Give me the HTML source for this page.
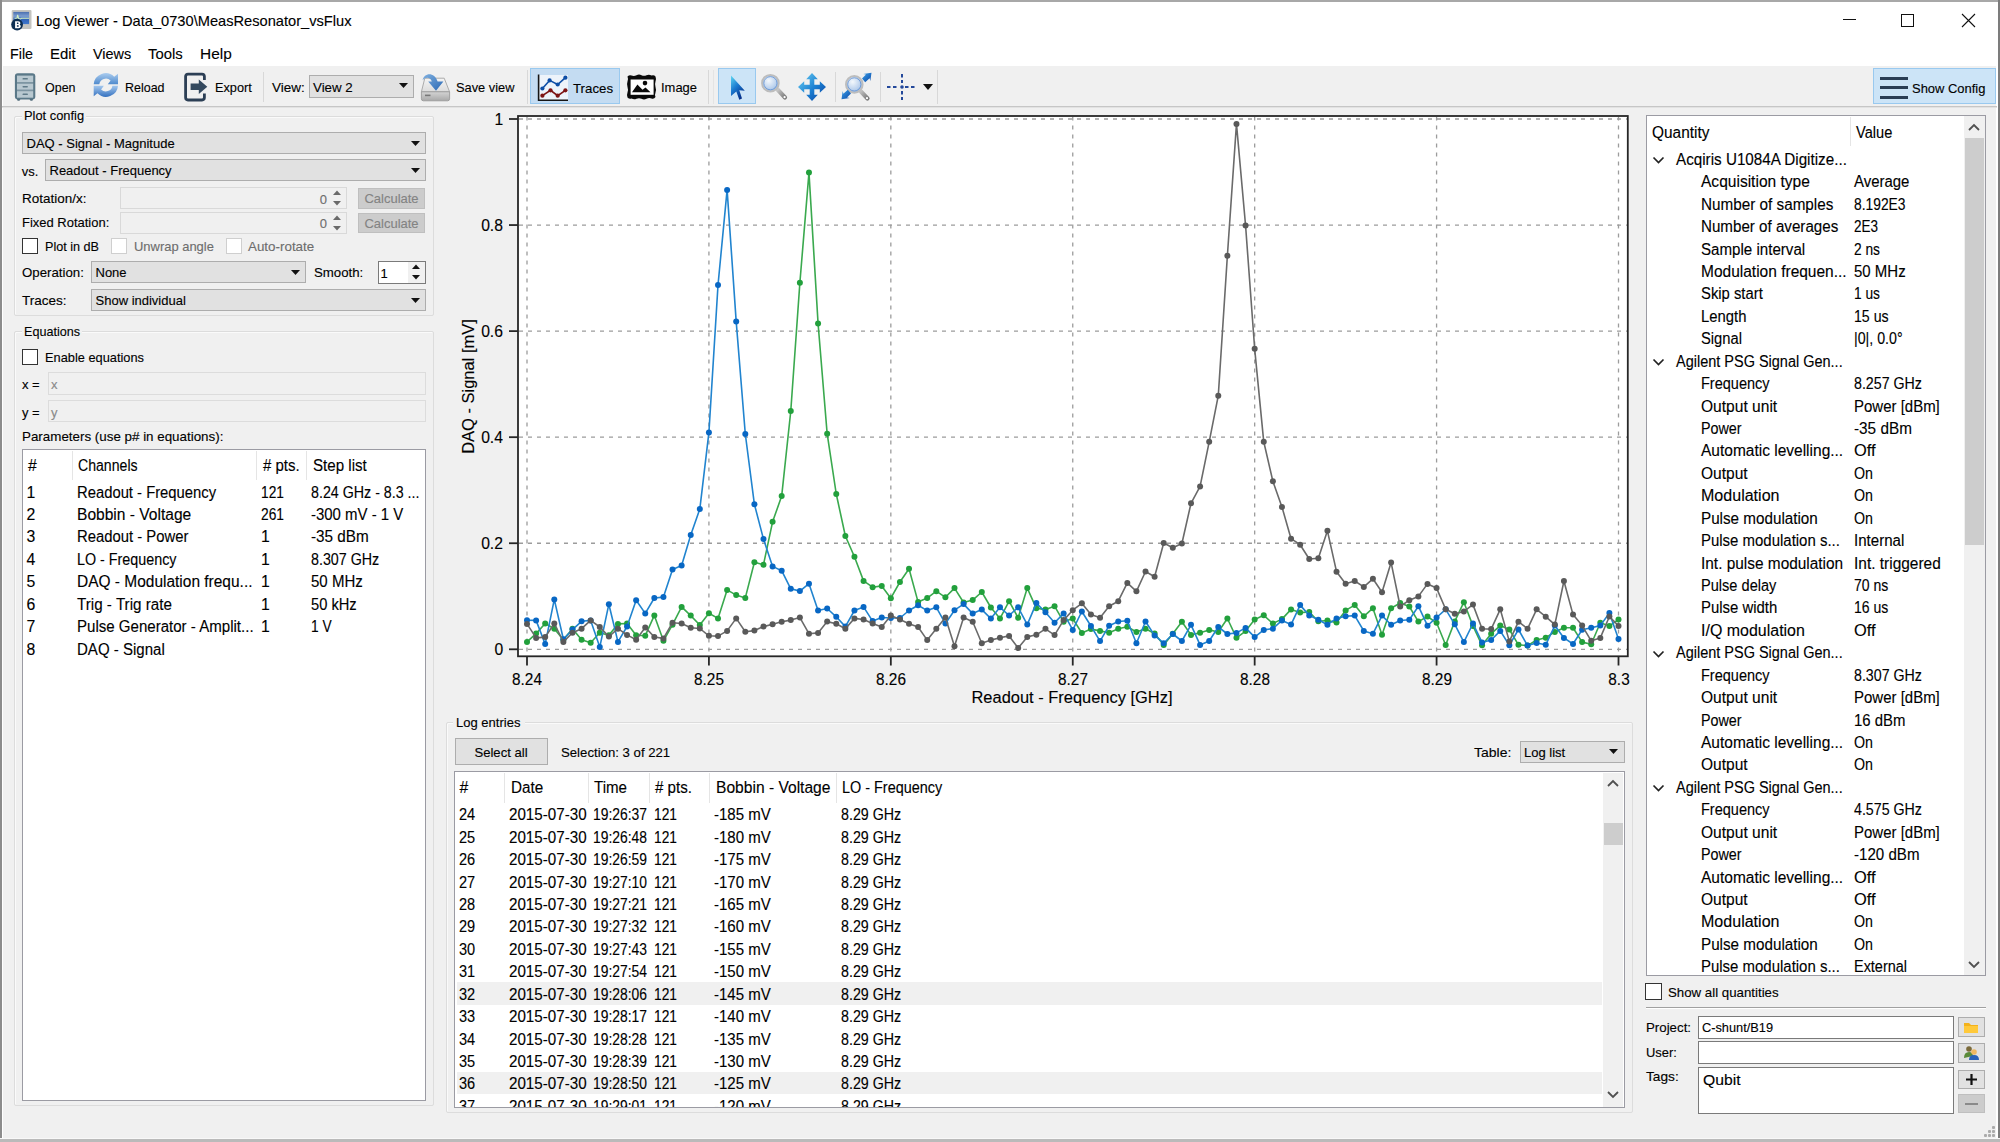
<!DOCTYPE html>
<html><head><meta charset="utf-8"><title>Log Viewer</title>
<style>
html,body{margin:0;padding:0;width:2000px;height:1142px;overflow:hidden;background:#f0f0f0;}
body{position:relative;font-family:"Liberation Sans", sans-serif;color:#000;}
.t{position:absolute;white-space:nowrap;-webkit-text-stroke:0.12px currentColor;}
.r{position:absolute;}
svg.r{overflow:visible;}
</style></head><body>
<div class="r" style="left:0px;top:0px;width:2000px;height:1142px;background:#f0f0f0;"></div>
<div class="r" style="left:0px;top:0px;width:2000px;height:66px;background:#ffffff;"></div>
<div class="r" style="left:0px;top:0px;width:2000px;height:2px;background:#a8a8a8;"></div>
<div class="r" style="left:0px;top:0px;width:2px;height:1142px;background:#8c8c8c;"></div>
<div class="r" style="left:2px;top:66px;width:1px;height:1073px;background:#ffffff;"></div>
<div class="r" style="left:1996px;top:66px;width:2px;height:1073px;background:#ffffff;"></div>
<div class="r" style="left:1998px;top:0px;width:2px;height:1142px;background:#7c7c7c;"></div>
<div class="r" style="left:0px;top:1138px;width:2000px;height:1px;background:#f8f8f8;"></div>
<div class="r" style="left:0px;top:1139px;width:2000px;height:3px;background:#bababa;"></div>
<svg class="r" style="left:10px;top:9px;" width="24" height="24" viewBox="0 0 24 24"><defs><linearGradient id="scr" x1="0" y1="0" x2="0" y2="1"><stop offset="0" stop-color="#4a6fb0"/><stop offset="0.35" stop-color="#7d9ed0"/><stop offset="0.6" stop-color="#2f62b8"/><stop offset="1" stop-color="#3f78cc"/></linearGradient></defs><rect x="1.7" y="0.9" width="19.8" height="19.1" rx="1.2" fill="#c4c4c0"/><rect x="3.3" y="2.9" width="15.8" height="12.2" fill="url(#scr)"/><path d="M4.5 9.3 L7 9.3 L7.6 5.8 L8.6 9.3 L10 10.2 L11.5 9.3 L19 9.3" stroke="#d4f0c0" stroke-width="1.1" fill="none"/><circle cx="7.1" cy="15.6" r="5.9" fill="#0c2e52"/><path d="M5.1 12.2 H8.2 Q10.4 12.2 10.4 14.1 Q10.4 15.2 9.5 15.6 Q10.8 16 10.8 17.4 Q10.8 19.2 8.4 19.2 H5.1 Z M6.9 13.6 V15 H7.9 Q8.6 15 8.6 14.3 Q8.6 13.6 7.9 13.6 Z M6.9 16.3 V17.8 H8.1 Q8.9 17.8 8.9 17 Q8.9 16.3 8.1 16.3 Z" fill="#fff" fill-rule="evenodd"/></svg>
<div class="t" style="left:35.80px;top:13.30px;font-size:15px;line-height:15px;transform:scaleX(0.9761);transform-origin:0 0;">Log Viewer - Data_0730\MeasResonator_vsFlux</div>
<div class="r" style="left:1843px;top:19px;width:13px;height:1px;background:#111;"></div>
<div class="r" style="left:1901px;top:14px;width:13px;height:13px;border:1px solid #111;box-sizing:border-box;"></div>
<svg class="r" style="left:1961px;top:13px;" width="15" height="15" viewBox="0 0 15 15"><path d="M1 1 L14 14 M14 1 L1 14" stroke="#111" stroke-width="1.1"/></svg>
<div class="t" style="left:10.00px;top:46.25px;font-size:15.3px;line-height:15.3px;transform:scaleX(0.9330);transform-origin:0 0;">File</div>
<div class="t" style="left:50.00px;top:46.25px;font-size:15.3px;line-height:15.3px;transform:scaleX(0.9767);transform-origin:0 0;">Edit</div>
<div class="t" style="left:92.50px;top:46.25px;font-size:15.3px;line-height:15.3px;transform:scaleX(0.9436);transform-origin:0 0;">Views</div>
<div class="t" style="left:148.25px;top:46.25px;font-size:15.3px;line-height:15.3px;transform:scaleX(0.9729);transform-origin:0 0;">Tools</div>
<div class="t" style="left:200.00px;top:46.25px;font-size:15.3px;line-height:15.3px;transform:scaleX(1.0090);transform-origin:0 0;">Help</div>
<div class="r" style="left:2px;top:106px;width:1995px;height:1px;background:#c6c6c6;"></div>
<div class="r" style="left:2px;top:107px;width:1995px;height:1px;background:#e2e2e2;"></div>
<svg class="r" style="left:14px;top:73px;" width="22" height="29" viewBox="0 0 22 29"><ellipse cx="4.6" cy="26.6" rx="1.6" ry="1.2" fill="#4a6575"/><ellipse cx="17.4" cy="26.6" rx="1.6" ry="1.2" fill="#4a6575"/><rect x="0.9" y="0.3" width="20.4" height="26.3" rx="3" fill="#5a7888"/><rect x="3" y="2.6" width="16.2" height="6.4" fill="#b8c8d0"/><rect x="3" y="10.4" width="16.2" height="6.4" fill="#b8c8d0"/><rect x="3" y="18.1" width="16.2" height="6.6" fill="#b8c8d0"/><rect x="3" y="9" width="16.2" height="1.4" fill="#7d95a2"/><rect x="3" y="16.8" width="16.2" height="1.3" fill="#7d95a2"/><rect x="8.5" y="5.1" width="5.4" height="1.5" rx="0.7" fill="#5f7a88"/><rect x="8.5" y="12.9" width="5.4" height="1.5" rx="0.7" fill="#5f7a88"/><rect x="8.5" y="20.6" width="5.4" height="1.5" rx="0.7" fill="#5f7a88"/></svg>
<div class="t" style="left:44.50px;top:81.00px;font-size:13px;line-height:13px;transform:scaleX(0.9591);transform-origin:0 0;">Open</div>
<svg class="r" style="left:92px;top:71.5px;" width="28" height="28" viewBox="0 0 28 28"><defs><linearGradient id="rg1" x1="0" y1="0" x2="0" y2="1"><stop offset="0" stop-color="#a9cbee"/><stop offset="1" stop-color="#4f8acd"/></linearGradient><linearGradient id="rg2" x1="0" y1="0" x2="0" y2="1"><stop offset="0" stop-color="#3672c0"/><stop offset="1" stop-color="#a4c8ee"/></linearGradient></defs><path d="M1.7 12.3 A12 12 0 0 1 22.2 4.8 L26 1.7 V12.3 H15.8 L18.6 8.6 A6.6 6.6 0 0 0 7.3 12.3 Z" fill="url(#rg1)"/><path transform="rotate(180 13.85 13)" d="M1.7 12.3 A12 12 0 0 1 22.2 4.8 L26 1.7 V12.3 H15.8 L18.6 8.6 A6.6 6.6 0 0 0 7.3 12.3 Z" fill="url(#rg2)"/></svg>
<div class="t" style="left:125.00px;top:81.00px;font-size:13px;line-height:13px;transform:scaleX(0.9589);transform-origin:0 0;">Reload</div>
<svg class="r" style="left:183px;top:72px;" width="26" height="30" viewBox="0 0 26 30"><path d="M12 2.2 H5 Q2.6 2.2 2.6 4.6 V25.6 Q2.6 28 5 28 H12" stroke="#2c3f55" stroke-width="2.8" fill="none"/><path d="M12 2.2 H19 Q21.4 2.2 21.4 4.6 V8 M21.4 21.6 V25.6 Q21.4 28 19 28 H12" stroke="#2c3f55" stroke-width="2.8" fill="none"/><path d="M7.6 11.6 H15.8 V7.5 L24.3 14.8 L15.8 22 V18 H7.6 Z" fill="#34495e"/></svg>
<div class="t" style="left:214.50px;top:81.00px;font-size:13px;line-height:13px;transform:scaleX(0.9781);transform-origin:0 0;">Export</div>
<div class="r" style="left:263px;top:72px;width:1px;height:30px;background:#d8d8d8;"></div>
<div class="t" style="left:271.75px;top:81.00px;font-size:13px;line-height:13px;transform:scaleX(1.0379);transform-origin:0 0;">View:</div>
<div class="r" style="left:309px;top:75px;width:105px;height:23px;background:#e1e1e1;border:1px solid #adadad;box-sizing:border-box;"></div>
<div class="t" style="left:313.25px;top:81.00px;font-size:13px;line-height:13px;transform:scaleX(1.0249);transform-origin:0 0;">View 2</div>
<svg class="r" style="left:399px;top:83px;" width="10" height="6" viewBox="0 0 10 6"><path d="M0 0 H9 L4.5 5 Z" fill="#111"/></svg>
<svg class="r" style="left:420px;top:72px;" width="32" height="30" viewBox="0 0 32 30"><defs><linearGradient id="sv1" x1="0" y1="0" x2="0" y2="1"><stop offset="0" stop-color="#f4f4f4"/><stop offset="1" stop-color="#dcdcdc"/></linearGradient><linearGradient id="sv2" x1="0" y1="0" x2="0" y2="1"><stop offset="0" stop-color="#d4d4d4"/><stop offset="1" stop-color="#a8a8a8"/></linearGradient><linearGradient id="sv3" x1="0" y1="0" x2="1" y2="1"><stop offset="0" stop-color="#7fb0e0"/><stop offset="1" stop-color="#2a68b4"/></linearGradient></defs><path d="M4.8 6.2 H24.2 L29.6 19.8 H1.4 Z" fill="url(#sv1)" stroke="#a4a4a4" stroke-width="0.9"/><path d="M1.4 19.8 H29.6 V26.8 Q29.6 28.8 27.6 28.8 H3.4 Q1.4 28.8 1.4 26.8 Z" fill="url(#sv2)" stroke="#9a9a9a" stroke-width="0.9"/><rect x="5" y="22.6" width="5.5" height="1.6" fill="#777"/><path d="M2.6 8.2 C4 0.5 14.5 -0.5 17.6 9.6 L23.4 9.6 L16 18.8 L8.2 9.6 L11.8 9.6 C10.2 5.2 6.2 4.6 2.6 8.2 Z" fill="url(#sv3)"/></svg>
<div class="t" style="left:455.50px;top:81.00px;font-size:13px;line-height:13px;transform:scaleX(0.9874);transform-origin:0 0;">Save view</div>
<div class="r" style="left:527px;top:70px;width:1px;height:34px;background:#d8d8d8;"></div>
<div class="r" style="left:530px;top:68px;width:90px;height:36px;background:#c4dcf2;border:1px solid #99c9ef;box-sizing:border-box;"></div>
<svg class="r" style="left:536px;top:72px;" width="34" height="30" viewBox="0 0 34 30"><rect x="3" y="3" width="29" height="25" fill="#edf3fa"/><path d="M2.6 2.6 V28.2 H32" stroke="#151515" stroke-width="1.6" fill="none"/><path d="M6.4 16.5 L13.6 8.4 L21.7 12.5 L29.4 5.7" stroke="#0d4ea6" stroke-width="1.6" fill="none"/><path d="M6.4 23.7 L14.5 18.3 L21.7 23.7 L29.4 18.3" stroke="#7d1414" stroke-width="1.6" fill="none"/><g fill="#0d4ea6"><circle cx="6.4" cy="16.5" r="2.1"/><circle cx="13.6" cy="8.4" r="2.1"/><circle cx="21.7" cy="12.5" r="2.1"/><circle cx="29.4" cy="5.7" r="2.1"/></g><g fill="#7d1414"><circle cx="6.4" cy="23.7" r="2.1"/><circle cx="14.5" cy="18.3" r="2.1"/><circle cx="21.7" cy="23.7" r="2.1"/><circle cx="29.4" cy="18.3" r="2.1"/></g></svg>
<div class="t" style="left:572.50px;top:82.00px;font-size:13px;line-height:13px;transform:scaleX(1.0192);transform-origin:0 0;">Traces</div>
<svg class="r" style="left:625px;top:73px;" width="33" height="28" viewBox="0 0 33 28"><path d="M2.5 3.5 Q4.5 1.5 6.5 2.5 Q9 3.5 11.5 2.2 Q14 1 16.5 2.2 Q19 3.5 21.5 2.2 Q24 1 26.5 2.5 Q29 1.5 30.5 3.5 Q31.5 6 30.5 8.5 Q29.5 11.5 30.5 14 Q31.5 17 30.5 19.5 Q29.5 22 30.5 24 Q29 26.5 26.5 25.5 Q24 24.5 21.5 25.8 Q19 27 16.5 25.8 Q14 24.5 11.5 25.8 Q9 27 6.5 25.5 Q4.5 26.5 2.5 24.5 Q1.5 22 2.5 19.5 Q3.5 17 2.5 14 Q1.5 11.5 2.5 8.5 Q3.5 6 2.5 3.5 Z" fill="#0a0a0a"/><rect x="5.6" y="6.5" width="23" height="15.3" fill="#fff"/><path d="M7 19.2 L12.4 11.5 L17.5 16.8 L20.5 14.5 L25.5 19.2 Z" fill="#0a0a0a"/><circle cx="20" cy="10.1" r="2.3" fill="#0a0a0a"/></svg>
<div class="t" style="left:661.00px;top:81.00px;font-size:13px;line-height:13px;transform:scaleX(0.9964);transform-origin:0 0;">Image</div>
<div class="r" style="left:708px;top:70px;width:1px;height:34px;background:#d8d8d8;"></div>
<div class="r" style="left:713px;top:70px;width:1px;height:34px;background:#e4e4e4;"></div>
<div class="r" style="left:718px;top:68px;width:38px;height:36px;background:#cce4f7;border:1px solid #99c9ef;box-sizing:border-box;"></div>
<svg class="r" style="left:728px;top:74px;" width="18" height="28" viewBox="0 0 18 28"><defs><linearGradient id="pg" x1="0" y1="0" x2="0.6" y2="1"><stop offset="0" stop-color="#5fd8f2"/><stop offset="0.5" stop-color="#1a7ad0"/><stop offset="1" stop-color="#06308a"/></linearGradient></defs><path d="M3 1.5 L16.8 16.8 L11.3 16.2 L14 24.6 L11.3 25.8 L8.3 17.6 L3 22 Z" fill="url(#pg)"/></svg>
<svg class="r" style="left:759px;top:72px;" width="32" height="32" viewBox="0 0 32 32"><defs><radialGradient id="lg" cx="0.4" cy="0.35" r="0.7"><stop offset="0" stop-color="#f4f8fc"/><stop offset="1" stop-color="#9dbde6"/></radialGradient><linearGradient id="hg" x1="0" y1="0" x2="1" y2="1"><stop offset="0" stop-color="#c8c8c8"/><stop offset="1" stop-color="#7a7a7a"/></linearGradient></defs><line x1="18.5" y1="17.5" x2="26" y2="25.5" stroke="url(#hg)" stroke-width="4.2" stroke-linecap="round"/><circle cx="25.6" cy="25.2" r="1.1" fill="#fff"/><circle cx="11.4" cy="11.2" r="8.3" fill="url(#lg)" stroke="#bdbdbd" stroke-width="2"/><circle cx="11.4" cy="11.2" r="6.6" fill="none" stroke="#5f8fd0" stroke-width="0.8"/></svg>
<svg class="r" style="left:797px;top:72px;" width="30" height="30" viewBox="0 0 30 30"><defs><linearGradient id="pn" x1="0" y1="0" x2="1" y2="1"><stop offset="0" stop-color="#6fd3f4"/><stop offset="0.55" stop-color="#1b7fd2"/><stop offset="1" stop-color="#0a3f9e"/></linearGradient></defs><path d="M15 1 L20.8 7.2 H17.3 V12.7 H22.8 V9.2 L29 15 L22.8 20.8 V17.3 H17.3 V22.8 H20.8 L15 29 L9.2 22.8 H12.7 V17.3 H7.2 V20.8 L1 15 L7.2 9.2 V12.7 H12.7 V7.2 H9.2 Z" fill="url(#pn)"/></svg>
<div class="r" style="left:835px;top:72px;width:1px;height:30px;background:#d8d8d8;"></div>
<svg class="r" style="left:840px;top:72px;" width="34" height="32" viewBox="0 0 34 32"><defs><linearGradient id="zf" x1="0" y1="0" x2="1" y2="1"><stop offset="0" stop-color="#3aa0e8"/><stop offset="1" stop-color="#0a48a8"/></linearGradient></defs><line x1="20" y1="18.5" x2="27.5" y2="26.5" stroke="url(#hg)" stroke-width="4.2" stroke-linecap="round"/><circle cx="27" cy="26.2" r="1.1" fill="#fff"/><circle cx="14.3" cy="12.4" r="8.3" fill="url(#lg)" stroke="#bdbdbd" stroke-width="2"/><circle cx="14.3" cy="12.4" r="6.6" fill="none" stroke="#5f8fd0" stroke-width="0.8"/><path d="M22 6.5 L26 2.5 L23.2 2 L31.5 0.8 L30.3 9 L29.6 6.2 L25.2 10.2 Z" fill="url(#zf)"/><path d="M11 21.5 L7 25.5 L9.8 26 L1.5 27.2 L2.7 19 L3.4 21.8 L7.8 17.8 Z" fill="url(#zf)"/></svg>
<div class="r" style="left:880px;top:72px;width:1px;height:30px;background:#d8d8d8;"></div>
<svg class="r" style="left:886px;top:73px;" width="32" height="28" viewBox="0 0 32 28"><path d="M1 14 H12 M19 14 H31" stroke="#23489a" stroke-width="2" stroke-dasharray="3.5 2.5"/><path d="M16 1 V10 M16 18 V27" stroke="#23489a" stroke-width="2" stroke-dasharray="3.5 2.5"/><circle cx="16" cy="14" r="1.8" fill="#23489a"/></svg>
<svg class="r" style="left:923px;top:84px;" width="11" height="7" viewBox="0 0 11 7"><path d="M0 0 H10 L5 6 Z" fill="#111"/></svg>
<div class="r" style="left:937px;top:70px;width:1px;height:34px;background:#d8d8d8;"></div>
<div class="r" style="left:1873px;top:68px;width:123px;height:36px;background:#cce4f7;border:1px solid #99c9ef;box-sizing:border-box;"></div>
<div class="r" style="left:1880px;top:77px;width:28px;height:3px;background:#2a3e55;"></div>
<div class="r" style="left:1880px;top:86px;width:28px;height:3px;background:#2a3e55;"></div>
<div class="r" style="left:1880px;top:96px;width:28px;height:3px;background:#2a3e55;"></div>
<div class="t" style="left:1911.60px;top:82.00px;font-size:13px;line-height:13px;transform:scaleX(0.9958);transform-origin:0 0;">Show Config</div>
<div class="r" style="left:14px;top:116px;width:420px;height:200px;border:1px solid #dcdcdc;box-sizing:border-box;border-radius:2px;box-shadow:inset 1px 1px 0 #fafafa;"></div>
<div class="r" style="left:22px;top:108px;width:64px;height:14px;background:#f0f0f0;"></div>
<div class="t" style="left:24.30px;top:108.80px;font-size:13px;line-height:13px;transform:scaleX(0.9901);transform-origin:0 0;">Plot config</div>
<div class="r" style="left:22px;top:132px;width:404px;height:22px;background:#e1e1e1;border:1px solid #adadad;box-sizing:border-box;"></div>
<div class="t" style="left:26.50px;top:136.60px;font-size:13px;line-height:13px;">DAQ - Signal - Magnitude</div>
<svg class="r" style="left:411px;top:140.5px;" width="10" height="6" viewBox="0 0 10 6"><path d="M0 0 H9 L4.5 5 Z" fill="#111"/></svg>
<div class="t" style="left:21.80px;top:164.60px;font-size:13px;line-height:13px;">vs.</div>
<div class="r" style="left:45px;top:159px;width:381px;height:22px;background:#e1e1e1;border:1px solid #adadad;box-sizing:border-box;"></div>
<div class="t" style="left:49.50px;top:163.60px;font-size:13px;line-height:13px;">Readout - Frequency</div>
<svg class="r" style="left:411px;top:167.5px;" width="10" height="6" viewBox="0 0 10 6"><path d="M0 0 H9 L4.5 5 Z" fill="#111"/></svg>
<div class="t" style="left:22.00px;top:191.80px;font-size:13px;line-height:13px;transform:scaleX(1.0363);transform-origin:0 0;">Rotation/x:</div>
<div class="r" style="left:120px;top:187px;width:227px;height:22px;background:#f0f0f0;border:1px solid #d9d9d9;box-sizing:border-box;"></div>
<div class="t" style="right:1673.00px;top:192.50px;font-size:13px;line-height:13px;text-align:right;color:#6d6d6d;">0</div>
<svg class="r" style="left:332px;top:189px;" width="10" height="18" viewBox="0 0 10 18"><path d="M1 6 L5 1.5 L9 6 Z" fill="#6a6a6a"/><path d="M1 12 L5 16.5 L9 12 Z" fill="#6a6a6a"/></svg>
<div class="r" style="left:358px;top:188px;width:67px;height:21px;background:#cccccc;border:1px solid #bfbfbf;box-sizing:border-box;"></div>
<div class="t" style="left:191.50px;width:400px;text-align:center;top:192.00px;font-size:13px;line-height:13px;color:#838383;">Calculate</div>
<div class="t" style="left:22.00px;top:216.40px;font-size:13px;line-height:13px;transform:scaleX(0.9985);transform-origin:0 0;">Fixed Rotation:</div>
<div class="r" style="left:120px;top:212px;width:227px;height:22px;background:#f0f0f0;border:1px solid #d9d9d9;box-sizing:border-box;"></div>
<div class="t" style="right:1673.00px;top:217.00px;font-size:13px;line-height:13px;text-align:right;color:#6d6d6d;">0</div>
<svg class="r" style="left:332px;top:214px;" width="10" height="18" viewBox="0 0 10 18"><path d="M1 6 L5 1.5 L9 6 Z" fill="#6a6a6a"/><path d="M1 12 L5 16.5 L9 12 Z" fill="#6a6a6a"/></svg>
<div class="r" style="left:358px;top:213px;width:67px;height:20px;background:#cccccc;border:1px solid #bfbfbf;box-sizing:border-box;"></div>
<div class="t" style="left:191.50px;width:400px;text-align:center;top:216.50px;font-size:13px;line-height:13px;color:#838383;">Calculate</div>
<div class="r" style="left:22px;top:238px;width:16px;height:16px;background:#fff;border:1px solid #333;box-sizing:border-box;"></div>
<div class="t" style="left:44.50px;top:240.00px;font-size:13px;line-height:13px;transform:scaleX(0.9705);transform-origin:0 0;">Plot in dB</div>
<div class="r" style="left:111px;top:238px;width:16px;height:16px;background:#fff;border:1px solid #cfcfcf;box-sizing:border-box;"></div>
<div class="t" style="left:133.50px;top:240.00px;font-size:13px;line-height:13px;color:#6d6d6d;transform:scaleX(0.9961);transform-origin:0 0;">Unwrap angle</div>
<div class="r" style="left:226px;top:238px;width:16px;height:16px;background:#fff;border:1px solid #cfcfcf;box-sizing:border-box;"></div>
<div class="t" style="left:248.00px;top:240.00px;font-size:13px;line-height:13px;color:#6d6d6d;transform:scaleX(1.0293);transform-origin:0 0;">Auto-rotate</div>
<div class="t" style="left:22.00px;top:265.80px;font-size:13px;line-height:13px;transform:scaleX(1.0197);transform-origin:0 0;">Operation:</div>
<div class="r" style="left:91px;top:261px;width:215px;height:22px;background:#e1e1e1;border:1px solid #adadad;box-sizing:border-box;"></div>
<div class="t" style="left:95.50px;top:265.60px;font-size:13px;line-height:13px;">None</div>
<svg class="r" style="left:291px;top:269.5px;" width="10" height="6" viewBox="0 0 10 6"><path d="M0 0 H9 L4.5 5 Z" fill="#111"/></svg>
<div class="t" style="left:313.50px;top:265.80px;font-size:13px;line-height:13px;transform:scaleX(1.0183);transform-origin:0 0;">Smooth:</div>
<div class="r" style="left:378px;top:261px;width:48px;height:23px;background:#fff;border:1px solid #7a7a7a;box-sizing:border-box;"></div>
<div class="t" style="left:380.50px;top:266.50px;font-size:13px;line-height:13px;">1</div>
<div class="r" style="left:408px;top:262px;width:17px;height:21px;background:#f0f0f0;"></div>
<svg class="r" style="left:411px;top:263px;" width="10" height="18" viewBox="0 0 10 18"><path d="M1 6 L5 1.5 L9 6 Z" fill="#111"/><path d="M1 12 L5 16.5 L9 12 Z" fill="#111"/></svg>
<div class="t" style="left:22.00px;top:294.00px;font-size:13px;line-height:13px;transform:scaleX(1.0406);transform-origin:0 0;">Traces:</div>
<div class="r" style="left:91px;top:289px;width:335px;height:22px;background:#e1e1e1;border:1px solid #adadad;box-sizing:border-box;"></div>
<div class="t" style="left:95.50px;top:293.60px;font-size:13px;line-height:13px;">Show individual</div>
<svg class="r" style="left:411px;top:297.5px;" width="10" height="6" viewBox="0 0 10 6"><path d="M0 0 H9 L4.5 5 Z" fill="#111"/></svg>
<div class="r" style="left:14px;top:331px;width:420px;height:775px;border:1px solid #dcdcdc;box-sizing:border-box;border-radius:2px;box-shadow:inset 1px 1px 0 #fafafa;"></div>
<div class="r" style="left:22px;top:325px;width:60px;height:14px;background:#f0f0f0;"></div>
<div class="t" style="left:24.30px;top:324.80px;font-size:13px;line-height:13px;transform:scaleX(0.9685);transform-origin:0 0;">Equations</div>
<div class="r" style="left:22px;top:349px;width:16px;height:16px;background:#fff;border:1px solid #333;box-sizing:border-box;"></div>
<div class="t" style="left:44.50px;top:351.00px;font-size:13px;line-height:13px;transform:scaleX(0.9854);transform-origin:0 0;">Enable equations</div>
<div class="t" style="left:22.00px;top:378.00px;font-size:13px;line-height:13px;">x =</div>
<div class="r" style="left:48px;top:372px;width:378px;height:23px;background:#f0f0f0;border:1px solid #dcdcdc;box-sizing:border-box;"></div>
<div class="t" style="left:51.00px;top:378.00px;font-size:13px;line-height:13px;color:#8a8a8a;">x</div>
<div class="t" style="left:22.00px;top:405.50px;font-size:13px;line-height:13px;">y =</div>
<div class="r" style="left:48px;top:400px;width:378px;height:22px;background:#f0f0f0;border:1px solid #dcdcdc;box-sizing:border-box;"></div>
<div class="t" style="left:51.00px;top:405.50px;font-size:13px;line-height:13px;color:#8a8a8a;">y</div>
<div class="t" style="left:22.00px;top:429.50px;font-size:13px;line-height:13px;transform:scaleX(1.0285);transform-origin:0 0;">Parameters (use p# in equations):</div>
<div class="r" style="left:22px;top:449px;width:404px;height:652px;background:#fff;border:1px solid #9b9ba3;box-sizing:border-box;"></div>
<div class="r" style="left:72px;top:451px;width:1px;height:29px;background:#e5e5e5;"></div>
<div class="r" style="left:256px;top:451px;width:1px;height:29px;background:#e5e5e5;"></div>
<div class="r" style="left:306px;top:451px;width:1px;height:29px;background:#e5e5e5;"></div>
<div class="t" style="left:28.00px;top:458.13px;font-size:15.8px;line-height:15.8px;">#</div>
<div class="t" style="left:78.00px;top:458.13px;font-size:15.8px;line-height:15.8px;transform:scaleX(0.8928);transform-origin:0 0;">Channels</div>
<div class="t" style="left:262.50px;top:458.13px;font-size:15.8px;line-height:15.8px;transform:scaleX(0.9497);transform-origin:0 0;"># pts.</div>
<div class="t" style="left:312.50px;top:458.13px;font-size:15.8px;line-height:15.8px;transform:scaleX(0.9572);transform-origin:0 0;">Step list</div>
<div class="t" style="left:26.50px;top:484.63px;font-size:15.8px;line-height:15.8px;">1</div>
<div class="t" style="left:76.50px;top:484.63px;font-size:15.8px;line-height:15.8px;transform:scaleX(0.9372);transform-origin:0 0;">Readout - Frequency</div>
<div class="t" style="left:261.00px;top:484.63px;font-size:15.8px;line-height:15.8px;transform:scaleX(0.8725);transform-origin:0 0;">121</div>
<div class="t" style="left:310.50px;top:484.63px;font-size:15.8px;line-height:15.8px;transform:scaleX(0.9019);transform-origin:0 0;">8.24 GHz - 8.3 ...</div>
<div class="t" style="left:26.50px;top:507.06px;font-size:15.8px;line-height:15.8px;">2</div>
<div class="t" style="left:76.50px;top:507.06px;font-size:15.8px;line-height:15.8px;transform:scaleX(0.9857);transform-origin:0 0;">Bobbin - Voltage</div>
<div class="t" style="left:261.00px;top:507.06px;font-size:15.8px;line-height:15.8px;transform:scaleX(0.8725);transform-origin:0 0;">261</div>
<div class="t" style="left:310.50px;top:507.06px;font-size:15.8px;line-height:15.8px;transform:scaleX(0.9470);transform-origin:0 0;">-300 mV - 1 V</div>
<div class="t" style="left:26.50px;top:529.49px;font-size:15.8px;line-height:15.8px;">3</div>
<div class="t" style="left:76.50px;top:529.49px;font-size:15.8px;line-height:15.8px;transform:scaleX(0.9396);transform-origin:0 0;">Readout - Power</div>
<div class="t" style="left:261.00px;top:529.49px;font-size:15.8px;line-height:15.8px;">1</div>
<div class="t" style="left:310.50px;top:529.49px;font-size:15.8px;line-height:15.8px;transform:scaleX(0.9680);transform-origin:0 0;">-35 dBm</div>
<div class="t" style="left:26.50px;top:551.92px;font-size:15.8px;line-height:15.8px;">4</div>
<div class="t" style="left:76.50px;top:551.92px;font-size:15.8px;line-height:15.8px;transform:scaleX(0.9065);transform-origin:0 0;">LO - Frequency</div>
<div class="t" style="left:261.00px;top:551.92px;font-size:15.8px;line-height:15.8px;">1</div>
<div class="t" style="left:310.50px;top:551.92px;font-size:15.8px;line-height:15.8px;transform:scaleX(0.9030);transform-origin:0 0;">8.307 GHz</div>
<div class="t" style="left:26.50px;top:574.35px;font-size:15.8px;line-height:15.8px;">5</div>
<div class="t" style="left:76.50px;top:574.35px;font-size:15.8px;line-height:15.8px;transform:scaleX(0.9797);transform-origin:0 0;">DAQ - Modulation frequ...</div>
<div class="t" style="left:261.00px;top:574.35px;font-size:15.8px;line-height:15.8px;">1</div>
<div class="t" style="left:310.50px;top:574.35px;font-size:15.8px;line-height:15.8px;transform:scaleX(0.9516);transform-origin:0 0;">50 MHz</div>
<div class="t" style="left:26.50px;top:596.78px;font-size:15.8px;line-height:15.8px;">6</div>
<div class="t" style="left:76.50px;top:596.78px;font-size:15.8px;line-height:15.8px;transform:scaleX(0.9633);transform-origin:0 0;">Trig - Trig rate</div>
<div class="t" style="left:261.00px;top:596.78px;font-size:15.8px;line-height:15.8px;">1</div>
<div class="t" style="left:310.50px;top:596.78px;font-size:15.8px;line-height:15.8px;transform:scaleX(0.9293);transform-origin:0 0;">50 kHz</div>
<div class="t" style="left:26.50px;top:619.21px;font-size:15.8px;line-height:15.8px;">7</div>
<div class="t" style="left:76.50px;top:619.21px;font-size:15.8px;line-height:15.8px;transform:scaleX(0.9531);transform-origin:0 0;">Pulse Generator - Amplit...</div>
<div class="t" style="left:261.00px;top:619.21px;font-size:15.8px;line-height:15.8px;">1</div>
<div class="t" style="left:310.50px;top:619.21px;font-size:15.8px;line-height:15.8px;transform:scaleX(0.8728);transform-origin:0 0;">1 V</div>
<div class="t" style="left:26.50px;top:641.64px;font-size:15.8px;line-height:15.8px;">8</div>
<div class="t" style="left:76.50px;top:641.64px;font-size:15.8px;line-height:15.8px;transform:scaleX(0.9523);transform-origin:0 0;">DAQ - Signal</div>
<div class="t" style="left:261.00px;top:641.64px;font-size:15.8px;line-height:15.8px;"></div>
<div class="t" style="left:310.50px;top:641.64px;font-size:15.8px;line-height:15.8px;"></div>
<svg class="r" style="left:440px;top:106px;" width="1200" height="606" viewBox="0 0 1200 606"><rect x="78" y="10" width="1110" height="540" fill="#fff"/><line x1="79" y1="543.30" x2="1187" y2="543.30" stroke="#9c9c9c" stroke-width="1.3" stroke-dasharray="4 5" stroke-dashoffset="0"/><line x1="79" y1="437.24" x2="1187" y2="437.24" stroke="#9c9c9c" stroke-width="1.3" stroke-dasharray="4 5" stroke-dashoffset="0"/><line x1="79" y1="331.18" x2="1187" y2="331.18" stroke="#9c9c9c" stroke-width="1.3" stroke-dasharray="4 5" stroke-dashoffset="0"/><line x1="79" y1="225.12" x2="1187" y2="225.12" stroke="#9c9c9c" stroke-width="1.3" stroke-dasharray="4 5" stroke-dashoffset="0"/><line x1="79" y1="119.06" x2="1187" y2="119.06" stroke="#9c9c9c" stroke-width="1.3" stroke-dasharray="4 5" stroke-dashoffset="0"/><line x1="79" y1="13.00" x2="1187" y2="13.00" stroke="#9c9c9c" stroke-width="1.3" stroke-dasharray="4 5" stroke-dashoffset="0"/><line x1="87.00" y1="11" x2="87.00" y2="549" stroke="#9c9c9c" stroke-width="1.3" stroke-dasharray="4 5" stroke-dashoffset="0.6"/><line x1="268.92" y1="11" x2="268.92" y2="549" stroke="#9c9c9c" stroke-width="1.3" stroke-dasharray="4 5" stroke-dashoffset="0.6"/><line x1="450.83" y1="11" x2="450.83" y2="549" stroke="#9c9c9c" stroke-width="1.3" stroke-dasharray="4 5" stroke-dashoffset="0.6"/><line x1="632.75" y1="11" x2="632.75" y2="549" stroke="#9c9c9c" stroke-width="1.3" stroke-dasharray="4 5" stroke-dashoffset="0.6"/><line x1="814.67" y1="11" x2="814.67" y2="549" stroke="#9c9c9c" stroke-width="1.3" stroke-dasharray="4 5" stroke-dashoffset="0.6"/><line x1="996.58" y1="11" x2="996.58" y2="549" stroke="#9c9c9c" stroke-width="1.3" stroke-dasharray="4 5" stroke-dashoffset="0.6"/><line x1="1178.50" y1="11" x2="1178.50" y2="549" stroke="#9c9c9c" stroke-width="1.3" stroke-dasharray="4 5" stroke-dashoffset="0.6"/><polyline points="87.00,535.90 96.10,527.60 105.19,517.50 114.29,522.70 123.38,533.70 132.48,522.70 141.58,533.70 150.67,536.70 159.77,526.70 168.86,529.30 177.96,517.90 187.05,517.50 196.15,529.30 205.25,529.70 214.34,509.40 223.44,534.80 232.53,518.70 241.63,500.90 250.73,509.60 259.82,519.00 268.92,507.20 278.01,512.40 287.11,483.90 296.20,489.10 305.30,491.90 314.40,456.30 323.49,458.70 332.59,415.80 341.68,390.10 350.78,305.00 359.88,176.80 368.97,66.60 378.07,217.50 387.16,327.70 396.26,388.00 405.35,430.00 414.45,450.80 423.55,474.90 432.64,481.20 441.74,479.90 450.83,492.20 459.93,476.00 469.02,462.70 478.12,496.10 487.22,492.10 496.31,485.20 505.41,491.30 514.50,482.10 523.60,496.50 532.70,494.10 541.79,486.00 550.89,501.50 559.98,512.60 569.08,495.20 578.17,511.80 587.27,482.10 596.37,502.30 605.46,503.60 614.56,500.20 623.65,515.80 632.75,512.60 641.85,527.00 650.94,523.10 660.04,524.90 669.13,526.70 678.23,522.80 687.33,520.70 696.42,526.00 705.52,522.80 714.61,527.50 723.71,539.10 732.80,527.80 741.90,515.70 751.00,528.90 760.09,526.70 769.19,523.90 778.28,526.00 787.38,512.50 796.47,531.80 805.57,525.10 814.67,513.50 823.76,509.30 832.86,517.50 841.95,513.10 851.05,503.40 860.15,506.60 869.24,506.00 878.34,515.20 887.43,514.50 896.53,516.60 905.62,504.40 914.72,499.10 923.82,510.30 932.91,502.20 942.01,528.80 951.10,502.20 960.20,497.00 969.30,500.50 978.39,515.60 987.49,510.50 996.58,516.80 1005.68,539.00 1014.78,515.40 1023.87,496.20 1032.97,519.90 1042.06,539.30 1051.16,527.70 1060.25,519.60 1069.35,523.50 1078.45,538.80 1087.54,539.60 1096.64,534.00 1105.73,531.70 1114.83,525.90 1123.92,521.70 1133.02,521.70 1142.12,536.10 1151.21,538.20 1160.31,516.80 1169.40,519.90 1178.50,513.60" fill="none" stroke="#3aa94e" stroke-width="1.6" stroke-linejoin="round"/><g fill="#22a03c"><circle cx="87.00" cy="535.90" r="3"/><circle cx="96.10" cy="527.60" r="3"/><circle cx="105.19" cy="517.50" r="3"/><circle cx="114.29" cy="522.70" r="3"/><circle cx="123.38" cy="533.70" r="3"/><circle cx="132.48" cy="522.70" r="3"/><circle cx="141.58" cy="533.70" r="3"/><circle cx="150.67" cy="536.70" r="3"/><circle cx="159.77" cy="526.70" r="3"/><circle cx="168.86" cy="529.30" r="3"/><circle cx="177.96" cy="517.90" r="3"/><circle cx="187.05" cy="517.50" r="3"/><circle cx="196.15" cy="529.30" r="3"/><circle cx="205.25" cy="529.70" r="3"/><circle cx="214.34" cy="509.40" r="3"/><circle cx="223.44" cy="534.80" r="3"/><circle cx="232.53" cy="518.70" r="3"/><circle cx="241.63" cy="500.90" r="3"/><circle cx="250.73" cy="509.60" r="3"/><circle cx="259.82" cy="519.00" r="3"/><circle cx="268.92" cy="507.20" r="3"/><circle cx="278.01" cy="512.40" r="3"/><circle cx="287.11" cy="483.90" r="3"/><circle cx="296.20" cy="489.10" r="3"/><circle cx="305.30" cy="491.90" r="3"/><circle cx="314.40" cy="456.30" r="3"/><circle cx="323.49" cy="458.70" r="3"/><circle cx="332.59" cy="415.80" r="3"/><circle cx="341.68" cy="390.10" r="3"/><circle cx="350.78" cy="305.00" r="3"/><circle cx="359.88" cy="176.80" r="3"/><circle cx="368.97" cy="66.60" r="3"/><circle cx="378.07" cy="217.50" r="3"/><circle cx="387.16" cy="327.70" r="3"/><circle cx="396.26" cy="388.00" r="3"/><circle cx="405.35" cy="430.00" r="3"/><circle cx="414.45" cy="450.80" r="3"/><circle cx="423.55" cy="474.90" r="3"/><circle cx="432.64" cy="481.20" r="3"/><circle cx="441.74" cy="479.90" r="3"/><circle cx="450.83" cy="492.20" r="3"/><circle cx="459.93" cy="476.00" r="3"/><circle cx="469.02" cy="462.70" r="3"/><circle cx="478.12" cy="496.10" r="3"/><circle cx="487.22" cy="492.10" r="3"/><circle cx="496.31" cy="485.20" r="3"/><circle cx="505.41" cy="491.30" r="3"/><circle cx="514.50" cy="482.10" r="3"/><circle cx="523.60" cy="496.50" r="3"/><circle cx="532.70" cy="494.10" r="3"/><circle cx="541.79" cy="486.00" r="3"/><circle cx="550.89" cy="501.50" r="3"/><circle cx="559.98" cy="512.60" r="3"/><circle cx="569.08" cy="495.20" r="3"/><circle cx="578.17" cy="511.80" r="3"/><circle cx="587.27" cy="482.10" r="3"/><circle cx="596.37" cy="502.30" r="3"/><circle cx="605.46" cy="503.60" r="3"/><circle cx="614.56" cy="500.20" r="3"/><circle cx="623.65" cy="515.80" r="3"/><circle cx="632.75" cy="512.60" r="3"/><circle cx="641.85" cy="527.00" r="3"/><circle cx="650.94" cy="523.10" r="3"/><circle cx="660.04" cy="524.90" r="3"/><circle cx="669.13" cy="526.70" r="3"/><circle cx="678.23" cy="522.80" r="3"/><circle cx="687.33" cy="520.70" r="3"/><circle cx="696.42" cy="526.00" r="3"/><circle cx="705.52" cy="522.80" r="3"/><circle cx="714.61" cy="527.50" r="3"/><circle cx="723.71" cy="539.10" r="3"/><circle cx="732.80" cy="527.80" r="3"/><circle cx="741.90" cy="515.70" r="3"/><circle cx="751.00" cy="528.90" r="3"/><circle cx="760.09" cy="526.70" r="3"/><circle cx="769.19" cy="523.90" r="3"/><circle cx="778.28" cy="526.00" r="3"/><circle cx="787.38" cy="512.50" r="3"/><circle cx="796.47" cy="531.80" r="3"/><circle cx="805.57" cy="525.10" r="3"/><circle cx="814.67" cy="513.50" r="3"/><circle cx="823.76" cy="509.30" r="3"/><circle cx="832.86" cy="517.50" r="3"/><circle cx="841.95" cy="513.10" r="3"/><circle cx="851.05" cy="503.40" r="3"/><circle cx="860.15" cy="506.60" r="3"/><circle cx="869.24" cy="506.00" r="3"/><circle cx="878.34" cy="515.20" r="3"/><circle cx="887.43" cy="514.50" r="3"/><circle cx="896.53" cy="516.60" r="3"/><circle cx="905.62" cy="504.40" r="3"/><circle cx="914.72" cy="499.10" r="3"/><circle cx="923.82" cy="510.30" r="3"/><circle cx="932.91" cy="502.20" r="3"/><circle cx="942.01" cy="528.80" r="3"/><circle cx="951.10" cy="502.20" r="3"/><circle cx="960.20" cy="497.00" r="3"/><circle cx="969.30" cy="500.50" r="3"/><circle cx="978.39" cy="515.60" r="3"/><circle cx="987.49" cy="510.50" r="3"/><circle cx="996.58" cy="516.80" r="3"/><circle cx="1005.68" cy="539.00" r="3"/><circle cx="1014.78" cy="515.40" r="3"/><circle cx="1023.87" cy="496.20" r="3"/><circle cx="1032.97" cy="519.90" r="3"/><circle cx="1042.06" cy="539.30" r="3"/><circle cx="1051.16" cy="527.70" r="3"/><circle cx="1060.25" cy="519.60" r="3"/><circle cx="1069.35" cy="523.50" r="3"/><circle cx="1078.45" cy="538.80" r="3"/><circle cx="1087.54" cy="539.60" r="3"/><circle cx="1096.64" cy="534.00" r="3"/><circle cx="1105.73" cy="531.70" r="3"/><circle cx="1114.83" cy="525.90" r="3"/><circle cx="1123.92" cy="521.70" r="3"/><circle cx="1133.02" cy="521.70" r="3"/><circle cx="1142.12" cy="536.10" r="3"/><circle cx="1151.21" cy="538.20" r="3"/><circle cx="1160.31" cy="516.80" r="3"/><circle cx="1169.40" cy="519.90" r="3"/><circle cx="1178.50" cy="513.60" r="3"/></g><polyline points="87.00,514.20 96.10,514.40 105.19,538.10 114.29,493.40 123.38,533.20 132.48,523.60 141.58,515.30 150.67,514.40 159.77,541.10 168.86,498.20 177.96,535.90 187.05,520.50 196.15,494.30 205.25,507.40 214.34,492.00 223.44,491.10 232.53,463.50 241.63,459.60 250.73,428.90 259.82,403.10 268.92,326.40 278.01,179.00 287.11,83.90 296.20,215.60 305.30,328.00 314.40,398.30 323.49,433.10 332.59,460.40 341.68,464.70 350.78,482.80 359.88,485.10 368.97,477.70 378.07,504.50 387.16,502.50 396.26,510.80 405.35,520.60 414.45,504.50 423.55,500.90 432.64,515.10 441.74,511.50 450.83,512.00 459.93,512.00 469.02,504.50 478.12,499.20 487.22,504.60 496.31,501.30 505.41,517.60 514.50,504.20 523.60,498.10 532.70,507.60 541.79,503.60 550.89,512.60 559.98,501.30 569.08,509.50 578.17,501.30 587.27,518.60 596.37,497.10 605.46,506.30 614.56,516.80 623.65,507.40 632.75,523.90 641.85,505.50 650.94,520.00 660.04,535.10 669.13,519.70 678.23,515.50 687.33,514.70 696.42,537.20 705.52,515.50 714.61,529.40 723.71,537.20 732.80,528.00 741.90,535.00 751.00,518.80 760.09,538.90 769.19,535.00 778.28,521.00 787.38,528.00 796.47,526.90 805.57,521.90 814.67,531.10 823.76,523.90 832.86,522.70 841.95,514.40 851.05,518.60 860.15,499.10 869.24,509.40 878.34,513.80 887.43,518.70 896.53,512.40 905.62,510.30 914.72,509.60 923.82,525.00 932.91,527.80 942.01,509.60 951.10,518.70 960.20,514.50 969.30,513.80 978.39,500.20 987.49,519.70 996.58,511.50 1005.68,503.30 1014.78,518.30 1023.87,536.10 1032.97,517.50 1042.06,536.40 1051.16,534.00 1060.25,524.90 1069.35,539.30 1078.45,523.50 1087.54,539.60 1096.64,537.00 1105.73,538.80 1114.83,519.60 1123.92,531.90 1133.02,538.00 1142.12,523.80 1151.21,521.70 1160.31,519.60 1169.40,507.00 1178.50,533.00" fill="none" stroke="#2184cf" stroke-width="1.6" stroke-linejoin="round"/><g fill="#0867c4"><circle cx="87.00" cy="514.20" r="3"/><circle cx="96.10" cy="514.40" r="3"/><circle cx="105.19" cy="538.10" r="3"/><circle cx="114.29" cy="493.40" r="3"/><circle cx="123.38" cy="533.20" r="3"/><circle cx="132.48" cy="523.60" r="3"/><circle cx="141.58" cy="515.30" r="3"/><circle cx="150.67" cy="514.40" r="3"/><circle cx="159.77" cy="541.10" r="3"/><circle cx="168.86" cy="498.20" r="3"/><circle cx="177.96" cy="535.90" r="3"/><circle cx="187.05" cy="520.50" r="3"/><circle cx="196.15" cy="494.30" r="3"/><circle cx="205.25" cy="507.40" r="3"/><circle cx="214.34" cy="492.00" r="3"/><circle cx="223.44" cy="491.10" r="3"/><circle cx="232.53" cy="463.50" r="3"/><circle cx="241.63" cy="459.60" r="3"/><circle cx="250.73" cy="428.90" r="3"/><circle cx="259.82" cy="403.10" r="3"/><circle cx="268.92" cy="326.40" r="3"/><circle cx="278.01" cy="179.00" r="3"/><circle cx="287.11" cy="83.90" r="3"/><circle cx="296.20" cy="215.60" r="3"/><circle cx="305.30" cy="328.00" r="3"/><circle cx="314.40" cy="398.30" r="3"/><circle cx="323.49" cy="433.10" r="3"/><circle cx="332.59" cy="460.40" r="3"/><circle cx="341.68" cy="464.70" r="3"/><circle cx="350.78" cy="482.80" r="3"/><circle cx="359.88" cy="485.10" r="3"/><circle cx="368.97" cy="477.70" r="3"/><circle cx="378.07" cy="504.50" r="3"/><circle cx="387.16" cy="502.50" r="3"/><circle cx="396.26" cy="510.80" r="3"/><circle cx="405.35" cy="520.60" r="3"/><circle cx="414.45" cy="504.50" r="3"/><circle cx="423.55" cy="500.90" r="3"/><circle cx="432.64" cy="515.10" r="3"/><circle cx="441.74" cy="511.50" r="3"/><circle cx="450.83" cy="512.00" r="3"/><circle cx="459.93" cy="512.00" r="3"/><circle cx="469.02" cy="504.50" r="3"/><circle cx="478.12" cy="499.20" r="3"/><circle cx="487.22" cy="504.60" r="3"/><circle cx="496.31" cy="501.30" r="3"/><circle cx="505.41" cy="517.60" r="3"/><circle cx="514.50" cy="504.20" r="3"/><circle cx="523.60" cy="498.10" r="3"/><circle cx="532.70" cy="507.60" r="3"/><circle cx="541.79" cy="503.60" r="3"/><circle cx="550.89" cy="512.60" r="3"/><circle cx="559.98" cy="501.30" r="3"/><circle cx="569.08" cy="509.50" r="3"/><circle cx="578.17" cy="501.30" r="3"/><circle cx="587.27" cy="518.60" r="3"/><circle cx="596.37" cy="497.10" r="3"/><circle cx="605.46" cy="506.30" r="3"/><circle cx="614.56" cy="516.80" r="3"/><circle cx="623.65" cy="507.40" r="3"/><circle cx="632.75" cy="523.90" r="3"/><circle cx="641.85" cy="505.50" r="3"/><circle cx="650.94" cy="520.00" r="3"/><circle cx="660.04" cy="535.10" r="3"/><circle cx="669.13" cy="519.70" r="3"/><circle cx="678.23" cy="515.50" r="3"/><circle cx="687.33" cy="514.70" r="3"/><circle cx="696.42" cy="537.20" r="3"/><circle cx="705.52" cy="515.50" r="3"/><circle cx="714.61" cy="529.40" r="3"/><circle cx="723.71" cy="537.20" r="3"/><circle cx="732.80" cy="528.00" r="3"/><circle cx="741.90" cy="535.00" r="3"/><circle cx="751.00" cy="518.80" r="3"/><circle cx="760.09" cy="538.90" r="3"/><circle cx="769.19" cy="535.00" r="3"/><circle cx="778.28" cy="521.00" r="3"/><circle cx="787.38" cy="528.00" r="3"/><circle cx="796.47" cy="526.90" r="3"/><circle cx="805.57" cy="521.90" r="3"/><circle cx="814.67" cy="531.10" r="3"/><circle cx="823.76" cy="523.90" r="3"/><circle cx="832.86" cy="522.70" r="3"/><circle cx="841.95" cy="514.40" r="3"/><circle cx="851.05" cy="518.60" r="3"/><circle cx="860.15" cy="499.10" r="3"/><circle cx="869.24" cy="509.40" r="3"/><circle cx="878.34" cy="513.80" r="3"/><circle cx="887.43" cy="518.70" r="3"/><circle cx="896.53" cy="512.40" r="3"/><circle cx="905.62" cy="510.30" r="3"/><circle cx="914.72" cy="509.60" r="3"/><circle cx="923.82" cy="525.00" r="3"/><circle cx="932.91" cy="527.80" r="3"/><circle cx="942.01" cy="509.60" r="3"/><circle cx="951.10" cy="518.70" r="3"/><circle cx="960.20" cy="514.50" r="3"/><circle cx="969.30" cy="513.80" r="3"/><circle cx="978.39" cy="500.20" r="3"/><circle cx="987.49" cy="519.70" r="3"/><circle cx="996.58" cy="511.50" r="3"/><circle cx="1005.68" cy="503.30" r="3"/><circle cx="1014.78" cy="518.30" r="3"/><circle cx="1023.87" cy="536.10" r="3"/><circle cx="1032.97" cy="517.50" r="3"/><circle cx="1042.06" cy="536.40" r="3"/><circle cx="1051.16" cy="534.00" r="3"/><circle cx="1060.25" cy="524.90" r="3"/><circle cx="1069.35" cy="539.30" r="3"/><circle cx="1078.45" cy="523.50" r="3"/><circle cx="1087.54" cy="539.60" r="3"/><circle cx="1096.64" cy="537.00" r="3"/><circle cx="1105.73" cy="538.80" r="3"/><circle cx="1114.83" cy="519.60" r="3"/><circle cx="1123.92" cy="531.90" r="3"/><circle cx="1133.02" cy="538.00" r="3"/><circle cx="1142.12" cy="523.80" r="3"/><circle cx="1151.21" cy="521.70" r="3"/><circle cx="1160.31" cy="519.60" r="3"/><circle cx="1169.40" cy="507.00" r="3"/><circle cx="1178.50" cy="533.00" r="3"/></g><polyline points="87.00,517.90 96.10,531.90 105.19,531.10 114.29,517.50 123.38,535.90 132.48,526.70 141.58,522.70 150.67,514.40 159.77,521.00 168.86,530.60 177.96,522.70 187.05,528.90 196.15,533.70 205.25,521.40 214.34,531.00 223.44,532.40 232.53,516.70 241.63,517.50 250.73,521.70 259.82,522.50 268.92,529.80 278.01,530.10 287.11,524.90 296.20,512.40 305.30,525.70 314.40,524.60 323.49,520.60 332.59,518.30 341.68,515.70 350.78,514.10 359.88,511.60 368.97,527.70 378.07,526.90 387.16,515.60 396.26,517.80 405.35,522.70 414.45,512.40 423.55,513.50 432.64,517.50 441.74,520.90 450.83,509.60 459.93,513.50 469.02,517.70 478.12,521.00 487.22,534.10 496.31,522.80 505.41,511.60 514.50,540.20 523.60,511.60 532.70,515.80 541.79,537.20 550.89,534.10 559.98,531.80 569.08,529.90 578.17,542.10 587.27,530.90 596.37,528.80 605.46,522.80 614.56,529.10 623.65,514.10 632.75,504.20 641.85,497.30 650.94,508.60 660.04,511.80 669.13,500.20 678.23,495.20 687.33,476.90 696.42,485.30 705.52,465.50 714.61,470.80 723.71,437.00 732.80,441.80 741.90,437.50 751.00,397.30 760.09,380.40 769.19,335.80 778.28,289.70 787.38,149.80 796.47,17.90 805.57,119.50 814.67,242.80 823.76,335.80 832.86,375.20 841.95,400.90 851.05,432.70 860.15,438.70 869.24,453.00 878.34,452.20 887.43,424.80 896.53,465.70 905.62,477.80 914.72,475.00 923.82,480.90 932.91,472.80 942.01,486.20 951.10,456.60 960.20,500.50 969.30,494.20 978.39,490.40 987.49,477.90 996.58,482.10 1005.68,503.30 1014.78,507.80 1023.87,505.40 1032.97,498.60 1042.06,522.80 1051.16,523.10 1060.25,503.30 1069.35,535.40 1078.45,515.70 1087.54,522.80 1096.64,503.30 1105.73,510.70 1114.83,518.60 1123.92,475.00 1133.02,508.60 1142.12,519.60 1151.21,534.80 1160.31,531.90 1169.40,510.50 1178.50,519.90" fill="none" stroke="#6a6a6a" stroke-width="1.6" stroke-linejoin="round"/><g fill="#595959"><circle cx="87.00" cy="517.90" r="3"/><circle cx="96.10" cy="531.90" r="3"/><circle cx="105.19" cy="531.10" r="3"/><circle cx="114.29" cy="517.50" r="3"/><circle cx="123.38" cy="535.90" r="3"/><circle cx="132.48" cy="526.70" r="3"/><circle cx="141.58" cy="522.70" r="3"/><circle cx="150.67" cy="514.40" r="3"/><circle cx="159.77" cy="521.00" r="3"/><circle cx="168.86" cy="530.60" r="3"/><circle cx="177.96" cy="522.70" r="3"/><circle cx="187.05" cy="528.90" r="3"/><circle cx="196.15" cy="533.70" r="3"/><circle cx="205.25" cy="521.40" r="3"/><circle cx="214.34" cy="531.00" r="3"/><circle cx="223.44" cy="532.40" r="3"/><circle cx="232.53" cy="516.70" r="3"/><circle cx="241.63" cy="517.50" r="3"/><circle cx="250.73" cy="521.70" r="3"/><circle cx="259.82" cy="522.50" r="3"/><circle cx="268.92" cy="529.80" r="3"/><circle cx="278.01" cy="530.10" r="3"/><circle cx="287.11" cy="524.90" r="3"/><circle cx="296.20" cy="512.40" r="3"/><circle cx="305.30" cy="525.70" r="3"/><circle cx="314.40" cy="524.60" r="3"/><circle cx="323.49" cy="520.60" r="3"/><circle cx="332.59" cy="518.30" r="3"/><circle cx="341.68" cy="515.70" r="3"/><circle cx="350.78" cy="514.10" r="3"/><circle cx="359.88" cy="511.60" r="3"/><circle cx="368.97" cy="527.70" r="3"/><circle cx="378.07" cy="526.90" r="3"/><circle cx="387.16" cy="515.60" r="3"/><circle cx="396.26" cy="517.80" r="3"/><circle cx="405.35" cy="522.70" r="3"/><circle cx="414.45" cy="512.40" r="3"/><circle cx="423.55" cy="513.50" r="3"/><circle cx="432.64" cy="517.50" r="3"/><circle cx="441.74" cy="520.90" r="3"/><circle cx="450.83" cy="509.60" r="3"/><circle cx="459.93" cy="513.50" r="3"/><circle cx="469.02" cy="517.70" r="3"/><circle cx="478.12" cy="521.00" r="3"/><circle cx="487.22" cy="534.10" r="3"/><circle cx="496.31" cy="522.80" r="3"/><circle cx="505.41" cy="511.60" r="3"/><circle cx="514.50" cy="540.20" r="3"/><circle cx="523.60" cy="511.60" r="3"/><circle cx="532.70" cy="515.80" r="3"/><circle cx="541.79" cy="537.20" r="3"/><circle cx="550.89" cy="534.10" r="3"/><circle cx="559.98" cy="531.80" r="3"/><circle cx="569.08" cy="529.90" r="3"/><circle cx="578.17" cy="542.10" r="3"/><circle cx="587.27" cy="530.90" r="3"/><circle cx="596.37" cy="528.80" r="3"/><circle cx="605.46" cy="522.80" r="3"/><circle cx="614.56" cy="529.10" r="3"/><circle cx="623.65" cy="514.10" r="3"/><circle cx="632.75" cy="504.20" r="3"/><circle cx="641.85" cy="497.30" r="3"/><circle cx="650.94" cy="508.60" r="3"/><circle cx="660.04" cy="511.80" r="3"/><circle cx="669.13" cy="500.20" r="3"/><circle cx="678.23" cy="495.20" r="3"/><circle cx="687.33" cy="476.90" r="3"/><circle cx="696.42" cy="485.30" r="3"/><circle cx="705.52" cy="465.50" r="3"/><circle cx="714.61" cy="470.80" r="3"/><circle cx="723.71" cy="437.00" r="3"/><circle cx="732.80" cy="441.80" r="3"/><circle cx="741.90" cy="437.50" r="3"/><circle cx="751.00" cy="397.30" r="3"/><circle cx="760.09" cy="380.40" r="3"/><circle cx="769.19" cy="335.80" r="3"/><circle cx="778.28" cy="289.70" r="3"/><circle cx="787.38" cy="149.80" r="3"/><circle cx="796.47" cy="17.90" r="3"/><circle cx="805.57" cy="119.50" r="3"/><circle cx="814.67" cy="242.80" r="3"/><circle cx="823.76" cy="335.80" r="3"/><circle cx="832.86" cy="375.20" r="3"/><circle cx="841.95" cy="400.90" r="3"/><circle cx="851.05" cy="432.70" r="3"/><circle cx="860.15" cy="438.70" r="3"/><circle cx="869.24" cy="453.00" r="3"/><circle cx="878.34" cy="452.20" r="3"/><circle cx="887.43" cy="424.80" r="3"/><circle cx="896.53" cy="465.70" r="3"/><circle cx="905.62" cy="477.80" r="3"/><circle cx="914.72" cy="475.00" r="3"/><circle cx="923.82" cy="480.90" r="3"/><circle cx="932.91" cy="472.80" r="3"/><circle cx="942.01" cy="486.20" r="3"/><circle cx="951.10" cy="456.60" r="3"/><circle cx="960.20" cy="500.50" r="3"/><circle cx="969.30" cy="494.20" r="3"/><circle cx="978.39" cy="490.40" r="3"/><circle cx="987.49" cy="477.90" r="3"/><circle cx="996.58" cy="482.10" r="3"/><circle cx="1005.68" cy="503.30" r="3"/><circle cx="1014.78" cy="507.80" r="3"/><circle cx="1023.87" cy="505.40" r="3"/><circle cx="1032.97" cy="498.60" r="3"/><circle cx="1042.06" cy="522.80" r="3"/><circle cx="1051.16" cy="523.10" r="3"/><circle cx="1060.25" cy="503.30" r="3"/><circle cx="1069.35" cy="535.40" r="3"/><circle cx="1078.45" cy="515.70" r="3"/><circle cx="1087.54" cy="522.80" r="3"/><circle cx="1096.64" cy="503.30" r="3"/><circle cx="1105.73" cy="510.70" r="3"/><circle cx="1114.83" cy="518.60" r="3"/><circle cx="1123.92" cy="475.00" r="3"/><circle cx="1133.02" cy="508.60" r="3"/><circle cx="1142.12" cy="519.60" r="3"/><circle cx="1151.21" cy="534.80" r="3"/><circle cx="1160.31" cy="531.90" r="3"/><circle cx="1169.40" cy="510.50" r="3"/><circle cx="1178.50" cy="519.90" r="3"/></g><rect x="78" y="10" width="1109.8" height="540.3" fill="none" stroke="#262626" stroke-width="1.8"/><line x1="69" y1="543.30" x2="78" y2="543.30" stroke="#262626" stroke-width="1.8"/><line x1="69" y1="437.24" x2="78" y2="437.24" stroke="#262626" stroke-width="1.8"/><line x1="69" y1="331.18" x2="78" y2="331.18" stroke="#262626" stroke-width="1.8"/><line x1="69" y1="225.12" x2="78" y2="225.12" stroke="#262626" stroke-width="1.8"/><line x1="69" y1="119.06" x2="78" y2="119.06" stroke="#262626" stroke-width="1.8"/><line x1="69" y1="13.00" x2="78" y2="13.00" stroke="#262626" stroke-width="1.8"/><line x1="87.00" y1="550" x2="87.00" y2="559.5" stroke="#262626" stroke-width="1.8"/><line x1="268.92" y1="550" x2="268.92" y2="559.5" stroke="#262626" stroke-width="1.8"/><line x1="450.83" y1="550" x2="450.83" y2="559.5" stroke="#262626" stroke-width="1.8"/><line x1="632.75" y1="550" x2="632.75" y2="559.5" stroke="#262626" stroke-width="1.8"/><line x1="814.67" y1="550" x2="814.67" y2="559.5" stroke="#262626" stroke-width="1.8"/><line x1="996.58" y1="550" x2="996.58" y2="559.5" stroke="#262626" stroke-width="1.8"/><line x1="1178.50" y1="550" x2="1178.50" y2="559.5" stroke="#262626" stroke-width="1.8"/></svg>
<div class="t" style="right:1497.00px;top:641.23px;font-size:16.5px;line-height:16.5px;text-align:right;transform:scaleX(0.9500);transform-origin:100% 0;">0</div>
<div class="t" style="right:1497.00px;top:535.17px;font-size:16.5px;line-height:16.5px;text-align:right;transform:scaleX(0.9500);transform-origin:100% 0;">0.2</div>
<div class="t" style="right:1497.00px;top:429.11px;font-size:16.5px;line-height:16.5px;text-align:right;transform:scaleX(0.9500);transform-origin:100% 0;">0.4</div>
<div class="t" style="right:1497.00px;top:323.05px;font-size:16.5px;line-height:16.5px;text-align:right;transform:scaleX(0.9500);transform-origin:100% 0;">0.6</div>
<div class="t" style="right:1497.00px;top:216.99px;font-size:16.5px;line-height:16.5px;text-align:right;transform:scaleX(0.9500);transform-origin:100% 0;">0.8</div>
<div class="t" style="right:1497.00px;top:110.93px;font-size:16.5px;line-height:16.5px;text-align:right;transform:scaleX(0.9500);transform-origin:100% 0;">1</div>
<div class="t" style="left:327.00px;width:400px;text-align:center;top:670.53px;font-size:16.5px;line-height:16.5px;transform:scaleX(0.9300);transform-origin:50% 0;">8.24</div>
<div class="t" style="left:508.92px;width:400px;text-align:center;top:670.53px;font-size:16.5px;line-height:16.5px;transform:scaleX(0.9300);transform-origin:50% 0;">8.25</div>
<div class="t" style="left:690.83px;width:400px;text-align:center;top:670.53px;font-size:16.5px;line-height:16.5px;transform:scaleX(0.9300);transform-origin:50% 0;">8.26</div>
<div class="t" style="left:872.75px;width:400px;text-align:center;top:670.53px;font-size:16.5px;line-height:16.5px;transform:scaleX(0.9300);transform-origin:50% 0;">8.27</div>
<div class="t" style="left:1054.67px;width:400px;text-align:center;top:670.53px;font-size:16.5px;line-height:16.5px;transform:scaleX(0.9300);transform-origin:50% 0;">8.28</div>
<div class="t" style="left:1236.58px;width:400px;text-align:center;top:670.53px;font-size:16.5px;line-height:16.5px;transform:scaleX(0.9300);transform-origin:50% 0;">8.29</div>
<div class="t" style="left:1418.50px;width:400px;text-align:center;top:670.53px;font-size:16.5px;line-height:16.5px;transform:scaleX(0.9300);transform-origin:50% 0;">8.3</div>
<div class="t" style="left:872.10px;width:400px;text-align:center;top:688.69px;font-size:16.2px;line-height:16.2px;transform:scaleX(1.0157);transform-origin:50% 0;">Readout - Frequency [GHz]</div>
<div class="t" style="left:317.91px;top:378.15px;width:300px;height:17px;line-height:17px;font-size:17px;text-align:center;transform:rotate(-90deg) scaleX(0.9699);">DAQ - Signal [mV]</div>
<div class="r" style="left:446px;top:722px;width:1187px;height:391px;border:1px solid #dcdcdc;box-sizing:border-box;border-radius:2px;box-shadow:inset 1px 1px 0 #fafafa;"></div>
<div class="r" style="left:453px;top:714px;width:72px;height:14px;background:#f0f0f0;"></div>
<div class="t" style="left:456.20px;top:715.50px;font-size:13px;line-height:13px;transform:scaleX(1.0012);transform-origin:0 0;">Log entries</div>
<div class="r" style="left:455px;top:738px;width:93px;height:27px;background:#e1e1e1;border:1px solid #adadad;box-sizing:border-box;"></div>
<div class="t" style="left:301.00px;width:400px;text-align:center;top:745.50px;font-size:13px;line-height:13px;transform:scaleX(1.0086);transform-origin:50% 0;">Select all</div>
<div class="t" style="left:561.20px;top:745.50px;font-size:13px;line-height:13px;transform:scaleX(1.0140);transform-origin:0 0;">Selection: 3 of 221</div>
<div class="t" style="left:1474.20px;top:745.50px;font-size:13px;line-height:13px;transform:scaleX(1.0753);transform-origin:0 0;">Table:</div>
<div class="r" style="left:1520px;top:741px;width:105px;height:22px;background:#e1e1e1;border:1px solid #adadad;box-sizing:border-box;"></div>
<div class="t" style="left:1524.00px;top:745.50px;font-size:13px;line-height:13px;transform:scaleX(1.0003);transform-origin:0 0;">Log list</div>
<svg class="r" style="left:1609px;top:749px;" width="10" height="6" viewBox="0 0 10 6"><path d="M0 0 H9 L4.5 5 Z" fill="#111"/></svg>
<div class="r" style="left:454px;top:771px;width:1171px;height:337px;background:#fff;border:1px solid #9b9ba3;box-sizing:border-box;overflow:hidden;">
<div class="r" style="left:49px;top:1px;width:1px;height:30px;background:#e5e5e5;"></div>
<div class="r" style="left:133px;top:1px;width:1px;height:30px;background:#e5e5e5;"></div>
<div class="r" style="left:194px;top:1px;width:1px;height:30px;background:#e5e5e5;"></div>
<div class="r" style="left:254px;top:1px;width:1px;height:30px;background:#e5e5e5;"></div>
<div class="r" style="left:381px;top:1px;width:1px;height:30px;background:#e5e5e5;"></div>
<div class="t" style="left:4.50px;top:7.63px;font-size:15.8px;line-height:15.8px;">#</div>
<div class="t" style="left:55.50px;top:7.63px;font-size:15.8px;line-height:15.8px;transform:scaleX(0.9648);transform-origin:0 0;">Date</div>
<div class="t" style="left:139.00px;top:7.63px;font-size:15.8px;line-height:15.8px;transform:scaleX(0.9558);transform-origin:0 0;">Time</div>
<div class="t" style="left:200.00px;top:7.63px;font-size:15.8px;line-height:15.8px;transform:scaleX(0.9575);transform-origin:0 0;"># pts.</div>
<div class="t" style="left:260.50px;top:7.63px;font-size:15.8px;line-height:15.8px;transform:scaleX(0.9874);transform-origin:0 0;">Bobbin - Voltage</div>
<div class="t" style="left:387.00px;top:7.63px;font-size:15.8px;line-height:15.8px;transform:scaleX(0.9129);transform-origin:0 0;">LO - Frequency</div>
<div class="t" style="left:3.50px;top:35.33px;font-size:15.8px;line-height:15.8px;transform:scaleX(0.9218);transform-origin:0 0;">24</div>
<div class="t" style="left:53.50px;top:35.33px;font-size:15.8px;line-height:15.8px;transform:scaleX(0.9601);transform-origin:0 0;">2015-07-30</div>
<div class="t" style="left:137.50px;top:35.33px;font-size:15.8px;line-height:15.8px;transform:scaleX(0.8780);transform-origin:0 0;">19:26:37</div>
<div class="t" style="left:198.50px;top:35.33px;font-size:15.8px;line-height:15.8px;transform:scaleX(0.8725);transform-origin:0 0;">121</div>
<div class="t" style="left:258.50px;top:35.33px;font-size:15.8px;line-height:15.8px;transform:scaleX(0.9512);transform-origin:0 0;">-185 mV</div>
<div class="t" style="left:385.50px;top:35.33px;font-size:15.8px;line-height:15.8px;transform:scaleX(0.9020);transform-origin:0 0;">8.29 GHz</div>
<div class="t" style="left:3.50px;top:57.76px;font-size:15.8px;line-height:15.8px;transform:scaleX(0.9218);transform-origin:0 0;">25</div>
<div class="t" style="left:53.50px;top:57.76px;font-size:15.8px;line-height:15.8px;transform:scaleX(0.9601);transform-origin:0 0;">2015-07-30</div>
<div class="t" style="left:137.50px;top:57.76px;font-size:15.8px;line-height:15.8px;transform:scaleX(0.8780);transform-origin:0 0;">19:26:48</div>
<div class="t" style="left:198.50px;top:57.76px;font-size:15.8px;line-height:15.8px;transform:scaleX(0.8725);transform-origin:0 0;">121</div>
<div class="t" style="left:258.50px;top:57.76px;font-size:15.8px;line-height:15.8px;transform:scaleX(0.9512);transform-origin:0 0;">-180 mV</div>
<div class="t" style="left:385.50px;top:57.76px;font-size:15.8px;line-height:15.8px;transform:scaleX(0.9020);transform-origin:0 0;">8.29 GHz</div>
<div class="t" style="left:3.50px;top:80.19px;font-size:15.8px;line-height:15.8px;transform:scaleX(0.9218);transform-origin:0 0;">26</div>
<div class="t" style="left:53.50px;top:80.19px;font-size:15.8px;line-height:15.8px;transform:scaleX(0.9601);transform-origin:0 0;">2015-07-30</div>
<div class="t" style="left:137.50px;top:80.19px;font-size:15.8px;line-height:15.8px;transform:scaleX(0.8780);transform-origin:0 0;">19:26:59</div>
<div class="t" style="left:198.50px;top:80.19px;font-size:15.8px;line-height:15.8px;transform:scaleX(0.8725);transform-origin:0 0;">121</div>
<div class="t" style="left:258.50px;top:80.19px;font-size:15.8px;line-height:15.8px;transform:scaleX(0.9512);transform-origin:0 0;">-175 mV</div>
<div class="t" style="left:385.50px;top:80.19px;font-size:15.8px;line-height:15.8px;transform:scaleX(0.9020);transform-origin:0 0;">8.29 GHz</div>
<div class="t" style="left:3.50px;top:102.62px;font-size:15.8px;line-height:15.8px;transform:scaleX(0.9218);transform-origin:0 0;">27</div>
<div class="t" style="left:53.50px;top:102.62px;font-size:15.8px;line-height:15.8px;transform:scaleX(0.9601);transform-origin:0 0;">2015-07-30</div>
<div class="t" style="left:137.50px;top:102.62px;font-size:15.8px;line-height:15.8px;transform:scaleX(0.8780);transform-origin:0 0;">19:27:10</div>
<div class="t" style="left:198.50px;top:102.62px;font-size:15.8px;line-height:15.8px;transform:scaleX(0.8725);transform-origin:0 0;">121</div>
<div class="t" style="left:258.50px;top:102.62px;font-size:15.8px;line-height:15.8px;transform:scaleX(0.9512);transform-origin:0 0;">-170 mV</div>
<div class="t" style="left:385.50px;top:102.62px;font-size:15.8px;line-height:15.8px;transform:scaleX(0.9020);transform-origin:0 0;">8.29 GHz</div>
<div class="t" style="left:3.50px;top:125.05px;font-size:15.8px;line-height:15.8px;transform:scaleX(0.9218);transform-origin:0 0;">28</div>
<div class="t" style="left:53.50px;top:125.05px;font-size:15.8px;line-height:15.8px;transform:scaleX(0.9601);transform-origin:0 0;">2015-07-30</div>
<div class="t" style="left:137.50px;top:125.05px;font-size:15.8px;line-height:15.8px;transform:scaleX(0.8780);transform-origin:0 0;">19:27:21</div>
<div class="t" style="left:198.50px;top:125.05px;font-size:15.8px;line-height:15.8px;transform:scaleX(0.8725);transform-origin:0 0;">121</div>
<div class="t" style="left:258.50px;top:125.05px;font-size:15.8px;line-height:15.8px;transform:scaleX(0.9512);transform-origin:0 0;">-165 mV</div>
<div class="t" style="left:385.50px;top:125.05px;font-size:15.8px;line-height:15.8px;transform:scaleX(0.9020);transform-origin:0 0;">8.29 GHz</div>
<div class="t" style="left:3.50px;top:147.48px;font-size:15.8px;line-height:15.8px;transform:scaleX(0.9218);transform-origin:0 0;">29</div>
<div class="t" style="left:53.50px;top:147.48px;font-size:15.8px;line-height:15.8px;transform:scaleX(0.9601);transform-origin:0 0;">2015-07-30</div>
<div class="t" style="left:137.50px;top:147.48px;font-size:15.8px;line-height:15.8px;transform:scaleX(0.8780);transform-origin:0 0;">19:27:32</div>
<div class="t" style="left:198.50px;top:147.48px;font-size:15.8px;line-height:15.8px;transform:scaleX(0.8725);transform-origin:0 0;">121</div>
<div class="t" style="left:258.50px;top:147.48px;font-size:15.8px;line-height:15.8px;transform:scaleX(0.9512);transform-origin:0 0;">-160 mV</div>
<div class="t" style="left:385.50px;top:147.48px;font-size:15.8px;line-height:15.8px;transform:scaleX(0.9020);transform-origin:0 0;">8.29 GHz</div>
<div class="t" style="left:3.50px;top:169.91px;font-size:15.8px;line-height:15.8px;transform:scaleX(0.9218);transform-origin:0 0;">30</div>
<div class="t" style="left:53.50px;top:169.91px;font-size:15.8px;line-height:15.8px;transform:scaleX(0.9601);transform-origin:0 0;">2015-07-30</div>
<div class="t" style="left:137.50px;top:169.91px;font-size:15.8px;line-height:15.8px;transform:scaleX(0.8780);transform-origin:0 0;">19:27:43</div>
<div class="t" style="left:198.50px;top:169.91px;font-size:15.8px;line-height:15.8px;transform:scaleX(0.8725);transform-origin:0 0;">121</div>
<div class="t" style="left:258.50px;top:169.91px;font-size:15.8px;line-height:15.8px;transform:scaleX(0.9512);transform-origin:0 0;">-155 mV</div>
<div class="t" style="left:385.50px;top:169.91px;font-size:15.8px;line-height:15.8px;transform:scaleX(0.9020);transform-origin:0 0;">8.29 GHz</div>
<div class="t" style="left:3.50px;top:192.34px;font-size:15.8px;line-height:15.8px;transform:scaleX(0.9218);transform-origin:0 0;">31</div>
<div class="t" style="left:53.50px;top:192.34px;font-size:15.8px;line-height:15.8px;transform:scaleX(0.9601);transform-origin:0 0;">2015-07-30</div>
<div class="t" style="left:137.50px;top:192.34px;font-size:15.8px;line-height:15.8px;transform:scaleX(0.8780);transform-origin:0 0;">19:27:54</div>
<div class="t" style="left:198.50px;top:192.34px;font-size:15.8px;line-height:15.8px;transform:scaleX(0.8725);transform-origin:0 0;">121</div>
<div class="t" style="left:258.50px;top:192.34px;font-size:15.8px;line-height:15.8px;transform:scaleX(0.9512);transform-origin:0 0;">-150 mV</div>
<div class="t" style="left:385.50px;top:192.34px;font-size:15.8px;line-height:15.8px;transform:scaleX(0.9020);transform-origin:0 0;">8.29 GHz</div>
<div class="r" style="left:2px;top:210.24px;width:1145px;height:22.4px;background:#f0f0f0;"></div>
<div class="t" style="left:3.50px;top:214.77px;font-size:15.8px;line-height:15.8px;transform:scaleX(0.9218);transform-origin:0 0;">32</div>
<div class="t" style="left:53.50px;top:214.77px;font-size:15.8px;line-height:15.8px;transform:scaleX(0.9601);transform-origin:0 0;">2015-07-30</div>
<div class="t" style="left:137.50px;top:214.77px;font-size:15.8px;line-height:15.8px;transform:scaleX(0.8780);transform-origin:0 0;">19:28:06</div>
<div class="t" style="left:198.50px;top:214.77px;font-size:15.8px;line-height:15.8px;transform:scaleX(0.8725);transform-origin:0 0;">121</div>
<div class="t" style="left:258.50px;top:214.77px;font-size:15.8px;line-height:15.8px;transform:scaleX(0.9512);transform-origin:0 0;">-145 mV</div>
<div class="t" style="left:385.50px;top:214.77px;font-size:15.8px;line-height:15.8px;transform:scaleX(0.9020);transform-origin:0 0;">8.29 GHz</div>
<div class="t" style="left:3.50px;top:237.20px;font-size:15.8px;line-height:15.8px;transform:scaleX(0.9218);transform-origin:0 0;">33</div>
<div class="t" style="left:53.50px;top:237.20px;font-size:15.8px;line-height:15.8px;transform:scaleX(0.9601);transform-origin:0 0;">2015-07-30</div>
<div class="t" style="left:137.50px;top:237.20px;font-size:15.8px;line-height:15.8px;transform:scaleX(0.8780);transform-origin:0 0;">19:28:17</div>
<div class="t" style="left:198.50px;top:237.20px;font-size:15.8px;line-height:15.8px;transform:scaleX(0.8725);transform-origin:0 0;">121</div>
<div class="t" style="left:258.50px;top:237.20px;font-size:15.8px;line-height:15.8px;transform:scaleX(0.9512);transform-origin:0 0;">-140 mV</div>
<div class="t" style="left:385.50px;top:237.20px;font-size:15.8px;line-height:15.8px;transform:scaleX(0.9020);transform-origin:0 0;">8.29 GHz</div>
<div class="t" style="left:3.50px;top:259.63px;font-size:15.8px;line-height:15.8px;transform:scaleX(0.9218);transform-origin:0 0;">34</div>
<div class="t" style="left:53.50px;top:259.63px;font-size:15.8px;line-height:15.8px;transform:scaleX(0.9601);transform-origin:0 0;">2015-07-30</div>
<div class="t" style="left:137.50px;top:259.63px;font-size:15.8px;line-height:15.8px;transform:scaleX(0.8780);transform-origin:0 0;">19:28:28</div>
<div class="t" style="left:198.50px;top:259.63px;font-size:15.8px;line-height:15.8px;transform:scaleX(0.8725);transform-origin:0 0;">121</div>
<div class="t" style="left:258.50px;top:259.63px;font-size:15.8px;line-height:15.8px;transform:scaleX(0.9512);transform-origin:0 0;">-135 mV</div>
<div class="t" style="left:385.50px;top:259.63px;font-size:15.8px;line-height:15.8px;transform:scaleX(0.9020);transform-origin:0 0;">8.29 GHz</div>
<div class="t" style="left:3.50px;top:282.06px;font-size:15.8px;line-height:15.8px;transform:scaleX(0.9218);transform-origin:0 0;">35</div>
<div class="t" style="left:53.50px;top:282.06px;font-size:15.8px;line-height:15.8px;transform:scaleX(0.9601);transform-origin:0 0;">2015-07-30</div>
<div class="t" style="left:137.50px;top:282.06px;font-size:15.8px;line-height:15.8px;transform:scaleX(0.8780);transform-origin:0 0;">19:28:39</div>
<div class="t" style="left:198.50px;top:282.06px;font-size:15.8px;line-height:15.8px;transform:scaleX(0.8725);transform-origin:0 0;">121</div>
<div class="t" style="left:258.50px;top:282.06px;font-size:15.8px;line-height:15.8px;transform:scaleX(0.9512);transform-origin:0 0;">-130 mV</div>
<div class="t" style="left:385.50px;top:282.06px;font-size:15.8px;line-height:15.8px;transform:scaleX(0.9020);transform-origin:0 0;">8.29 GHz</div>
<div class="r" style="left:2px;top:299.96px;width:1145px;height:22.4px;background:#f0f0f0;"></div>
<div class="t" style="left:3.50px;top:304.49px;font-size:15.8px;line-height:15.8px;transform:scaleX(0.9218);transform-origin:0 0;">36</div>
<div class="t" style="left:53.50px;top:304.49px;font-size:15.8px;line-height:15.8px;transform:scaleX(0.9601);transform-origin:0 0;">2015-07-30</div>
<div class="t" style="left:137.50px;top:304.49px;font-size:15.8px;line-height:15.8px;transform:scaleX(0.8780);transform-origin:0 0;">19:28:50</div>
<div class="t" style="left:198.50px;top:304.49px;font-size:15.8px;line-height:15.8px;transform:scaleX(0.8725);transform-origin:0 0;">121</div>
<div class="t" style="left:258.50px;top:304.49px;font-size:15.8px;line-height:15.8px;transform:scaleX(0.9512);transform-origin:0 0;">-125 mV</div>
<div class="t" style="left:385.50px;top:304.49px;font-size:15.8px;line-height:15.8px;transform:scaleX(0.9020);transform-origin:0 0;">8.29 GHz</div>
<div class="t" style="left:3.50px;top:326.92px;font-size:15.8px;line-height:15.8px;transform:scaleX(0.9218);transform-origin:0 0;">37</div>
<div class="t" style="left:53.50px;top:326.92px;font-size:15.8px;line-height:15.8px;transform:scaleX(0.9601);transform-origin:0 0;">2015-07-30</div>
<div class="t" style="left:137.50px;top:326.92px;font-size:15.8px;line-height:15.8px;transform:scaleX(0.8780);transform-origin:0 0;">19:29:01</div>
<div class="t" style="left:198.50px;top:326.92px;font-size:15.8px;line-height:15.8px;transform:scaleX(0.8725);transform-origin:0 0;">121</div>
<div class="t" style="left:258.50px;top:326.92px;font-size:15.8px;line-height:15.8px;transform:scaleX(0.9512);transform-origin:0 0;">-120 mV</div>
<div class="t" style="left:385.50px;top:326.92px;font-size:15.8px;line-height:15.8px;transform:scaleX(0.9020);transform-origin:0 0;">8.29 GHz</div>
<div class="r" style="left:1148px;top:1px;width:20px;height:334px;background:#f0f0f0;"></div>
<div class="r" style="left:1149px;top:51px;width:19px;height:22px;background:#cdcdcd;"></div>
<svg class="r" style="left:1152px;top:7px;" width="12" height="8" viewBox="0 0 12 8"><path d="M1 7 L6 2 L11 7" stroke="#505050" stroke-width="1.8" fill="none"/></svg>
<svg class="r" style="left:1152px;top:319px;" width="12" height="8" viewBox="0 0 12 8"><path d="M1 1 L6 6 L11 1" stroke="#505050" stroke-width="1.8" fill="none"/></svg>
</div>
<div class="r" style="left:1646px;top:115px;width:340px;height:861px;background:#fff;border:1px solid #9b9ba3;box-sizing:border-box;overflow:hidden;">
<div class="r" style="left:203px;top:1px;width:1px;height:29px;background:#e5e5e5;"></div>
<div class="t" style="left:4.50px;top:9.43px;font-size:15.8px;line-height:15.8px;transform:scaleX(0.9755);transform-origin:0 0;">Quantity</div>
<div class="t" style="left:208.50px;top:9.43px;font-size:15.8px;line-height:15.8px;transform:scaleX(0.9251);transform-origin:0 0;">Value</div>
<svg class="r" style="left:5px;top:40.20px;" width="13" height="8" viewBox="0 0 13 8"><path d="M1.5 1.5 L6.5 6.5 L11.5 1.5" stroke="#222" stroke-width="1.7" fill="none"/></svg>
<div class="t" style="left:28.50px;top:35.83px;font-size:15.8px;line-height:15.8px;transform:scaleX(0.9634);transform-origin:0 0;">Acqiris U1084A Digitize...</div>
<div class="t" style="left:53.50px;top:58.26px;font-size:15.8px;line-height:15.8px;transform:scaleX(0.9841);transform-origin:0 0;">Acquisition type</div>
<div class="t" style="left:206.50px;top:58.26px;font-size:15.8px;line-height:15.8px;transform:scaleX(0.9460);transform-origin:0 0;">Average</div>
<div class="t" style="left:53.50px;top:80.69px;font-size:15.8px;line-height:15.8px;transform:scaleX(0.9665);transform-origin:0 0;">Number of samples</div>
<div class="t" style="left:206.50px;top:80.69px;font-size:15.8px;line-height:15.8px;transform:scaleX(0.8749);transform-origin:0 0;">8.192E3</div>
<div class="t" style="left:53.50px;top:103.12px;font-size:15.8px;line-height:15.8px;transform:scaleX(0.9591);transform-origin:0 0;">Number of averages</div>
<div class="t" style="left:206.50px;top:103.12px;font-size:15.8px;line-height:15.8px;transform:scaleX(0.8537);transform-origin:0 0;">2E3</div>
<div class="t" style="left:53.50px;top:125.55px;font-size:15.8px;line-height:15.8px;transform:scaleX(0.9569);transform-origin:0 0;">Sample interval</div>
<div class="t" style="left:206.50px;top:125.55px;font-size:15.8px;line-height:15.8px;transform:scaleX(0.8706);transform-origin:0 0;">2 ns</div>
<div class="t" style="left:53.50px;top:147.98px;font-size:15.8px;line-height:15.8px;transform:scaleX(0.9815);transform-origin:0 0;">Modulation frequen...</div>
<div class="t" style="left:206.50px;top:147.98px;font-size:15.8px;line-height:15.8px;transform:scaleX(0.9497);transform-origin:0 0;">50 MHz</div>
<div class="t" style="left:53.50px;top:170.41px;font-size:15.8px;line-height:15.8px;transform:scaleX(0.9385);transform-origin:0 0;">Skip start</div>
<div class="t" style="left:206.50px;top:170.41px;font-size:15.8px;line-height:15.8px;transform:scaleX(0.8706);transform-origin:0 0;">1 us</div>
<div class="t" style="left:53.50px;top:192.84px;font-size:15.8px;line-height:15.8px;transform:scaleX(0.9394);transform-origin:0 0;">Length</div>
<div class="t" style="left:206.50px;top:192.84px;font-size:15.8px;line-height:15.8px;transform:scaleX(0.8952);transform-origin:0 0;">15 us</div>
<div class="t" style="left:53.50px;top:215.27px;font-size:15.8px;line-height:15.8px;transform:scaleX(0.9334);transform-origin:0 0;">Signal</div>
<div class="t" style="left:206.50px;top:215.27px;font-size:15.8px;line-height:15.8px;transform:scaleX(0.8990);transform-origin:0 0;">|0|, 0.0°</div>
<svg class="r" style="left:5px;top:242.07px;" width="13" height="8" viewBox="0 0 13 8"><path d="M1.5 1.5 L6.5 6.5 L11.5 1.5" stroke="#222" stroke-width="1.7" fill="none"/></svg>
<div class="t" style="left:28.50px;top:237.70px;font-size:15.8px;line-height:15.8px;transform:scaleX(0.9169);transform-origin:0 0;">Agilent PSG Signal Gen...</div>
<div class="t" style="left:53.50px;top:260.13px;font-size:15.8px;line-height:15.8px;transform:scaleX(0.9190);transform-origin:0 0;">Frequency</div>
<div class="t" style="left:206.50px;top:260.13px;font-size:15.8px;line-height:15.8px;transform:scaleX(0.9003);transform-origin:0 0;">8.257 GHz</div>
<div class="t" style="left:53.50px;top:282.56px;font-size:15.8px;line-height:15.8px;transform:scaleX(0.9858);transform-origin:0 0;">Output unit</div>
<div class="t" style="left:206.50px;top:282.56px;font-size:15.8px;line-height:15.8px;transform:scaleX(0.9487);transform-origin:0 0;">Power [dBm]</div>
<div class="t" style="left:53.50px;top:304.99px;font-size:15.8px;line-height:15.8px;transform:scaleX(0.9065);transform-origin:0 0;">Power</div>
<div class="t" style="left:206.50px;top:304.99px;font-size:15.8px;line-height:15.8px;transform:scaleX(0.9696);transform-origin:0 0;">-35 dBm</div>
<div class="t" style="left:53.50px;top:327.42px;font-size:15.8px;line-height:15.8px;transform:scaleX(0.9814);transform-origin:0 0;">Automatic levelling...</div>
<div class="t" style="left:206.50px;top:327.42px;font-size:15.8px;line-height:15.8px;transform:scaleX(1.0394);transform-origin:0 0;">Off</div>
<div class="t" style="left:53.50px;top:349.85px;font-size:15.8px;line-height:15.8px;transform:scaleX(0.9846);transform-origin:0 0;">Output</div>
<div class="t" style="left:206.50px;top:349.85px;font-size:15.8px;line-height:15.8px;transform:scaleX(0.9015);transform-origin:0 0;">On</div>
<div class="t" style="left:53.50px;top:372.28px;font-size:15.8px;line-height:15.8px;transform:scaleX(1.0156);transform-origin:0 0;">Modulation</div>
<div class="t" style="left:206.50px;top:372.28px;font-size:15.8px;line-height:15.8px;transform:scaleX(0.9015);transform-origin:0 0;">On</div>
<div class="t" style="left:53.50px;top:394.71px;font-size:15.8px;line-height:15.8px;transform:scaleX(0.9636);transform-origin:0 0;">Pulse modulation</div>
<div class="t" style="left:206.50px;top:394.71px;font-size:15.8px;line-height:15.8px;transform:scaleX(0.9015);transform-origin:0 0;">On</div>
<div class="t" style="left:53.50px;top:417.14px;font-size:15.8px;line-height:15.8px;transform:scaleX(0.9470);transform-origin:0 0;">Pulse modulation s...</div>
<div class="t" style="left:206.50px;top:417.14px;font-size:15.8px;line-height:15.8px;transform:scaleX(0.9545);transform-origin:0 0;">Internal</div>
<div class="t" style="left:53.50px;top:439.57px;font-size:15.8px;line-height:15.8px;transform:scaleX(0.9753);transform-origin:0 0;">Int. pulse modulation</div>
<div class="t" style="left:206.50px;top:439.57px;font-size:15.8px;line-height:15.8px;transform:scaleX(0.9785);transform-origin:0 0;">Int. triggered</div>
<div class="t" style="left:53.50px;top:462.00px;font-size:15.8px;line-height:15.8px;transform:scaleX(0.9230);transform-origin:0 0;">Pulse delay</div>
<div class="t" style="left:206.50px;top:462.00px;font-size:15.8px;line-height:15.8px;transform:scaleX(0.8874);transform-origin:0 0;">70 ns</div>
<div class="t" style="left:53.50px;top:484.43px;font-size:15.8px;line-height:15.8px;transform:scaleX(0.9431);transform-origin:0 0;">Pulse width</div>
<div class="t" style="left:206.50px;top:484.43px;font-size:15.8px;line-height:15.8px;transform:scaleX(0.8874);transform-origin:0 0;">16 us</div>
<div class="t" style="left:53.50px;top:506.86px;font-size:15.8px;line-height:15.8px;transform:scaleX(1.0112);transform-origin:0 0;">I/Q modulation</div>
<div class="t" style="left:206.50px;top:506.86px;font-size:15.8px;line-height:15.8px;transform:scaleX(1.0394);transform-origin:0 0;">Off</div>
<svg class="r" style="left:5px;top:533.66px;" width="13" height="8" viewBox="0 0 13 8"><path d="M1.5 1.5 L6.5 6.5 L11.5 1.5" stroke="#222" stroke-width="1.7" fill="none"/></svg>
<div class="t" style="left:28.50px;top:529.29px;font-size:15.8px;line-height:15.8px;transform:scaleX(0.9169);transform-origin:0 0;">Agilent PSG Signal Gen...</div>
<div class="t" style="left:53.50px;top:551.72px;font-size:15.8px;line-height:15.8px;transform:scaleX(0.9190);transform-origin:0 0;">Frequency</div>
<div class="t" style="left:206.50px;top:551.72px;font-size:15.8px;line-height:15.8px;transform:scaleX(0.8990);transform-origin:0 0;">8.307 GHz</div>
<div class="t" style="left:53.50px;top:574.15px;font-size:15.8px;line-height:15.8px;transform:scaleX(0.9858);transform-origin:0 0;">Output unit</div>
<div class="t" style="left:206.50px;top:574.15px;font-size:15.8px;line-height:15.8px;transform:scaleX(0.9487);transform-origin:0 0;">Power [dBm]</div>
<div class="t" style="left:53.50px;top:596.58px;font-size:15.8px;line-height:15.8px;transform:scaleX(0.9065);transform-origin:0 0;">Power</div>
<div class="t" style="left:206.50px;top:596.58px;font-size:15.8px;line-height:15.8px;transform:scaleX(0.9458);transform-origin:0 0;">16 dBm</div>
<div class="t" style="left:53.50px;top:619.01px;font-size:15.8px;line-height:15.8px;transform:scaleX(0.9814);transform-origin:0 0;">Automatic levelling...</div>
<div class="t" style="left:206.50px;top:619.01px;font-size:15.8px;line-height:15.8px;transform:scaleX(0.9015);transform-origin:0 0;">On</div>
<div class="t" style="left:53.50px;top:641.44px;font-size:15.8px;line-height:15.8px;transform:scaleX(0.9846);transform-origin:0 0;">Output</div>
<div class="t" style="left:206.50px;top:641.44px;font-size:15.8px;line-height:15.8px;transform:scaleX(0.9015);transform-origin:0 0;">On</div>
<svg class="r" style="left:5px;top:668.24px;" width="13" height="8" viewBox="0 0 13 8"><path d="M1.5 1.5 L6.5 6.5 L11.5 1.5" stroke="#222" stroke-width="1.7" fill="none"/></svg>
<div class="t" style="left:28.50px;top:663.87px;font-size:15.8px;line-height:15.8px;transform:scaleX(0.9169);transform-origin:0 0;">Agilent PSG Signal Gen...</div>
<div class="t" style="left:53.50px;top:686.30px;font-size:15.8px;line-height:15.8px;transform:scaleX(0.9190);transform-origin:0 0;">Frequency</div>
<div class="t" style="left:206.50px;top:686.30px;font-size:15.8px;line-height:15.8px;transform:scaleX(0.8990);transform-origin:0 0;">4.575 GHz</div>
<div class="t" style="left:53.50px;top:708.73px;font-size:15.8px;line-height:15.8px;transform:scaleX(0.9858);transform-origin:0 0;">Output unit</div>
<div class="t" style="left:206.50px;top:708.73px;font-size:15.8px;line-height:15.8px;transform:scaleX(0.9487);transform-origin:0 0;">Power [dBm]</div>
<div class="t" style="left:53.50px;top:731.16px;font-size:15.8px;line-height:15.8px;transform:scaleX(0.9065);transform-origin:0 0;">Power</div>
<div class="t" style="left:206.50px;top:731.16px;font-size:15.8px;line-height:15.8px;transform:scaleX(0.9562);transform-origin:0 0;">-120 dBm</div>
<div class="t" style="left:53.50px;top:753.59px;font-size:15.8px;line-height:15.8px;transform:scaleX(0.9814);transform-origin:0 0;">Automatic levelling...</div>
<div class="t" style="left:206.50px;top:753.59px;font-size:15.8px;line-height:15.8px;transform:scaleX(1.0394);transform-origin:0 0;">Off</div>
<div class="t" style="left:53.50px;top:776.02px;font-size:15.8px;line-height:15.8px;transform:scaleX(0.9846);transform-origin:0 0;">Output</div>
<div class="t" style="left:206.50px;top:776.02px;font-size:15.8px;line-height:15.8px;transform:scaleX(1.0394);transform-origin:0 0;">Off</div>
<div class="t" style="left:53.50px;top:798.45px;font-size:15.8px;line-height:15.8px;transform:scaleX(1.0156);transform-origin:0 0;">Modulation</div>
<div class="t" style="left:206.50px;top:798.45px;font-size:15.8px;line-height:15.8px;transform:scaleX(0.9015);transform-origin:0 0;">On</div>
<div class="t" style="left:53.50px;top:820.88px;font-size:15.8px;line-height:15.8px;transform:scaleX(0.9636);transform-origin:0 0;">Pulse modulation</div>
<div class="t" style="left:206.50px;top:820.88px;font-size:15.8px;line-height:15.8px;transform:scaleX(0.9015);transform-origin:0 0;">On</div>
<div class="t" style="left:53.50px;top:843.31px;font-size:15.8px;line-height:15.8px;transform:scaleX(0.9470);transform-origin:0 0;">Pulse modulation s...</div>
<div class="t" style="left:206.50px;top:843.31px;font-size:15.8px;line-height:15.8px;transform:scaleX(0.9144);transform-origin:0 0;">External</div>
<div class="r" style="left:317px;top:0px;width:21px;height:859px;background:#f0f0f0;"></div>
<div class="r" style="left:318px;top:22px;width:19px;height:407px;background:#cdcdcd;"></div>
<svg class="r" style="left:321px;top:7px;" width="12" height="8" viewBox="0 0 12 8"><path d="M1 7 L6 2 L11 7" stroke="#505050" stroke-width="1.8" fill="none"/></svg>
<svg class="r" style="left:321px;top:845px;" width="12" height="8" viewBox="0 0 12 8"><path d="M1 1 L6 6 L11 1" stroke="#505050" stroke-width="1.8" fill="none"/></svg>
</div>
<div class="r" style="left:1645px;top:983px;width:17px;height:17px;background:#fff;border:1px solid #333;box-sizing:border-box;"></div>
<div class="t" style="left:1667.90px;top:985.50px;font-size:13px;line-height:13px;transform:scaleX(1.0203);transform-origin:0 0;">Show all quantities</div>
<div class="r" style="left:1646px;top:1007px;width:340px;height:1px;background:#a0a0a0;"></div>
<div class="r" style="left:1646px;top:1008px;width:340px;height:1px;background:#fff;"></div>
<div class="t" style="left:1645.70px;top:1021.00px;font-size:13px;line-height:13px;transform:scaleX(1.0211);transform-origin:0 0;">Project:</div>
<div class="r" style="left:1698px;top:1016px;width:256px;height:23px;background:#fff;border:1px solid #7a7a7a;box-sizing:border-box;"></div>
<div class="t" style="left:1701.80px;top:1021.00px;font-size:13px;line-height:13px;transform:scaleX(0.9826);transform-origin:0 0;">C-shunt/B19</div>
<div class="r" style="left:1958px;top:1017px;width:27px;height:20px;background:#e1e1e1;border:1px solid #adadad;box-sizing:border-box;"></div>
<svg class="r" style="left:1963px;top:1021px;" width="17" height="13" viewBox="0 0 17 13"><path d="M1 2 H6 L8 4 H15 V12 H1 Z" fill="#f3b21b"/><path d="M1 5 H15 V12 H1 Z" fill="#ffc93a"/></svg>
<div class="t" style="left:1645.70px;top:1046.00px;font-size:13px;line-height:13px;transform:scaleX(0.9949);transform-origin:0 0;">User:</div>
<div class="r" style="left:1698px;top:1041px;width:256px;height:23px;background:#fff;border:1px solid #7a7a7a;box-sizing:border-box;"></div>
<div class="r" style="left:1958px;top:1043px;width:27px;height:20px;background:#e1e1e1;border:1px solid #adadad;box-sizing:border-box;"></div>
<svg class="r" style="left:1963px;top:1045px;" width="17" height="16" viewBox="0 0 17 16"><circle cx="6" cy="4" r="2.8" fill="#7a6a3a"/><path d="M1 13 Q1 7 6 7 Q10 7 10 11 Z" fill="#5a8a3a"/><circle cx="11" cy="7" r="2.8" fill="#f0b860"/><path d="M6 15 Q6 10 11 10 Q16 10 16 15 Z" fill="#2a62b8"/></svg>
<div class="t" style="left:1645.70px;top:1069.50px;font-size:13px;line-height:13px;transform:scaleX(1.0524);transform-origin:0 0;">Tags:</div>
<div class="r" style="left:1698px;top:1067px;width:256px;height:47px;background:#fff;border:1px solid #7a7a7a;box-sizing:border-box;"></div>
<div class="t" style="left:1703.00px;top:1072.73px;font-size:14.5px;line-height:14.5px;transform:scaleX(1.0849);transform-origin:0 0;">Qubit</div>
<div class="r" style="left:1958px;top:1070px;width:27px;height:19px;background:#e1e1e1;border:1px solid #adadad;box-sizing:border-box;"></div>
<svg class="r" style="left:1964px;top:1072px;" width="15" height="15" viewBox="0 0 15 15"><path d="M7.5 2 V13 M2 7.5 H13" stroke="#111" stroke-width="2.2"/></svg>
<div class="r" style="left:1958px;top:1094px;width:27px;height:19px;background:#cccccc;border:1px solid #bfbfbf;box-sizing:border-box;"></div>
<div class="r" style="left:1965px;top:1103px;width:13px;height:2px;background:#8a8a8a;"></div>
<div class="r" style="left:1992px;top:1126px;width:3px;height:3px;background:#ababab;border-radius:1px;"></div>
<div class="r" style="left:1988px;top:1130px;width:3px;height:3px;background:#ababab;border-radius:1px;"></div>
<div class="r" style="left:1992px;top:1130px;width:3px;height:3px;background:#ababab;border-radius:1px;"></div>
<div class="r" style="left:1984px;top:1134px;width:3px;height:3px;background:#ababab;border-radius:1px;"></div>
<div class="r" style="left:1988px;top:1134px;width:3px;height:3px;background:#ababab;border-radius:1px;"></div>
<div class="r" style="left:1992px;top:1134px;width:3px;height:3px;background:#ababab;border-radius:1px;"></div>
</body></html>
